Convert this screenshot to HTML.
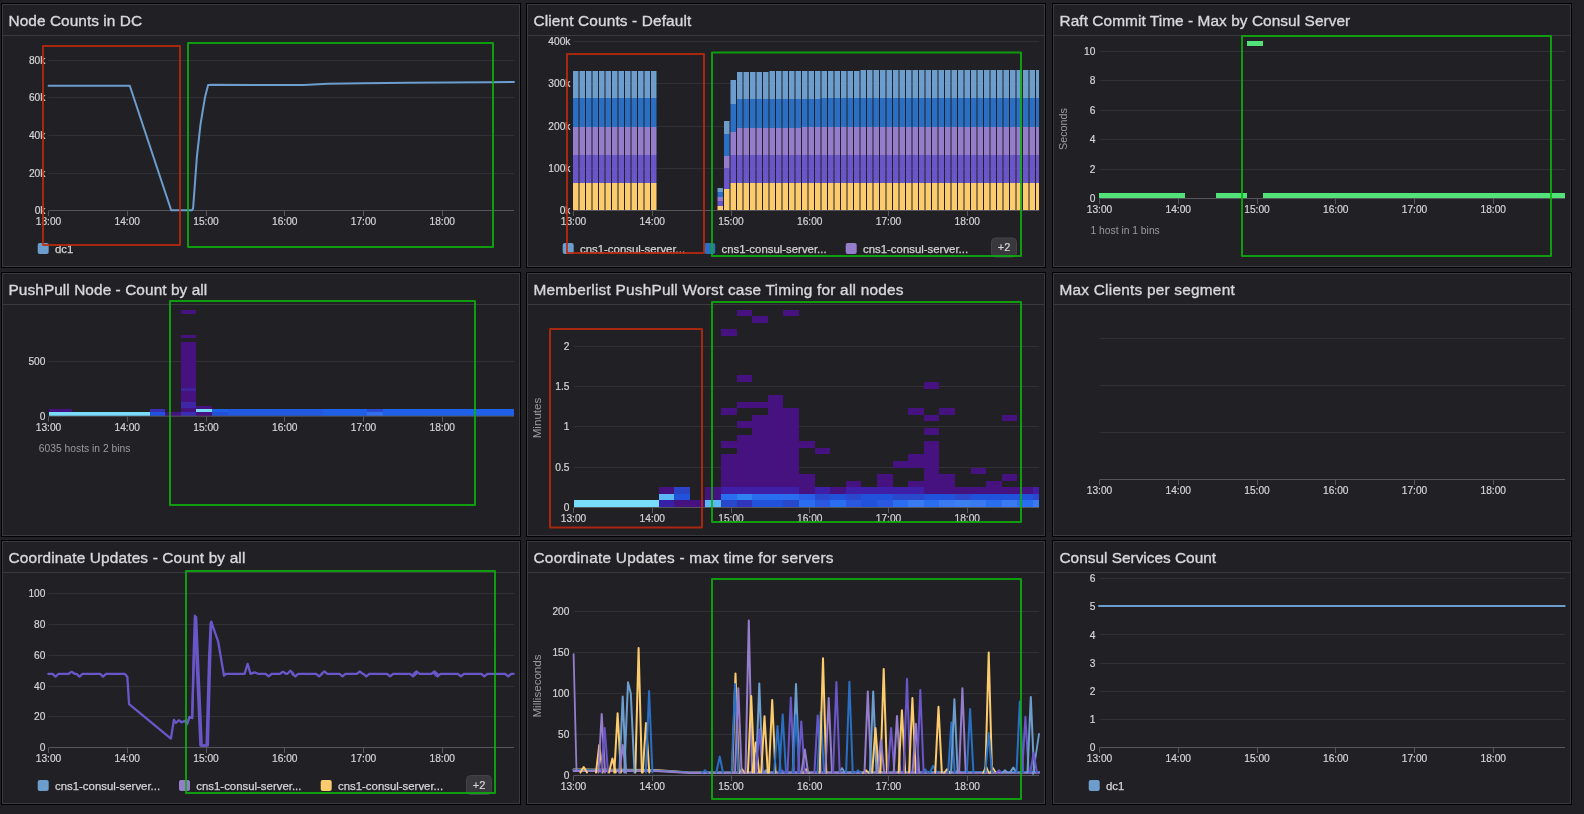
<!DOCTYPE html>
<html><head><meta charset="utf-8"><style>
html,body{margin:0;padding:0;background:#212125;width:1584px;height:814px;overflow:hidden}
svg{display:block;font-family:"Liberation Sans",sans-serif;will-change:transform}
</style></head><body>
<svg width="1584" height="814" viewBox="0 0 1584 814">
<rect width="1584" height="814" fill="#212125"/>
<rect x="1.5" y="3.5" width="519" height="264" fill="#212125" stroke="#000000" stroke-width="1"/>
<rect x="2.5" y="4.5" width="517" height="262" fill="none" stroke="#39393e" stroke-width="1"/>
<line x1="3" y1="35.5" x2="519" y2="35.5" stroke="#39393e" stroke-width="1" />
<text x="8.5" y="26" font-size="15.4" fill="#d8d8da" text-anchor="start" stroke="#d8d8da" stroke-width="0.35" letter-spacing="0.062">Node Counts in DC</text>
<line x1="48.5" y1="173.5" x2="514" y2="173.5" stroke="#303035" stroke-width="1" />
<text x="45.4" y="176.6" font-size="10.2" fill="#d4d4d6" text-anchor="end" stroke="#d4d4d6" stroke-width="0.2">20k</text>
<line x1="48.5" y1="135.5" x2="514" y2="135.5" stroke="#303035" stroke-width="1" />
<text x="45.4" y="139" font-size="10.2" fill="#d4d4d6" text-anchor="end" stroke="#d4d4d6" stroke-width="0.2">40k</text>
<line x1="48.5" y1="97.5" x2="514" y2="97.5" stroke="#303035" stroke-width="1" />
<text x="45.4" y="101.4" font-size="10.2" fill="#d4d4d6" text-anchor="end" stroke="#d4d4d6" stroke-width="0.2">60k</text>
<line x1="48.5" y1="60.5" x2="514" y2="60.5" stroke="#303035" stroke-width="1" />
<text x="45.4" y="63.8" font-size="10.2" fill="#d4d4d6" text-anchor="end" stroke="#d4d4d6" stroke-width="0.2">80k</text>
<text x="45.4" y="214.2" font-size="10.2" fill="#d4d4d6" text-anchor="end" stroke="#d4d4d6" stroke-width="0.2">0k</text>
<line x1="48.5" y1="210.5" x2="514" y2="210.5" stroke="#55555b" stroke-width="1" />
<line x1="48.5" y1="211" x2="48.5" y2="216" stroke="#55555b" stroke-width="1" />
<text x="48.5" y="225" font-size="10.2" fill="#d4d4d6" text-anchor="middle" stroke="#d4d4d6" stroke-width="0.2">13:00</text>
<line x1="127.5" y1="211" x2="127.5" y2="216" stroke="#55555b" stroke-width="1" />
<text x="127.25" y="225" font-size="10.2" fill="#d4d4d6" text-anchor="middle" stroke="#d4d4d6" stroke-width="0.2">14:00</text>
<line x1="206.5" y1="211" x2="206.5" y2="216" stroke="#55555b" stroke-width="1" />
<text x="206" y="225" font-size="10.2" fill="#d4d4d6" text-anchor="middle" stroke="#d4d4d6" stroke-width="0.2">15:00</text>
<line x1="284.5" y1="211" x2="284.5" y2="216" stroke="#55555b" stroke-width="1" />
<text x="284.75" y="225" font-size="10.2" fill="#d4d4d6" text-anchor="middle" stroke="#d4d4d6" stroke-width="0.2">16:00</text>
<line x1="363.5" y1="211" x2="363.5" y2="216" stroke="#55555b" stroke-width="1" />
<text x="363.5" y="225" font-size="10.2" fill="#d4d4d6" text-anchor="middle" stroke="#d4d4d6" stroke-width="0.2">17:00</text>
<line x1="442.5" y1="211" x2="442.5" y2="216" stroke="#55555b" stroke-width="1" />
<text x="442.25" y="225" font-size="10.2" fill="#d4d4d6" text-anchor="middle" stroke="#d4d4d6" stroke-width="0.2">18:00</text>
<path d="M48.6 85.8 L129.8 85.8 L171.2 210.3 L192 210.3 L193.1 208.4 L196.9 156.8 L200.5 124.3 L204.9 97.8 L208.1 85.1 L212.3 84.8 L304 85.1 L327.8 83.7 L363.2 83.2 L407.4 82.8 L490 82.2 L514 81.9" fill="none" stroke="#6c9dcd" stroke-width="2" stroke-linejoin="round" stroke-linecap="round" />
<rect x="37.7" y="242.9" width="11" height="11" rx="2" fill="#6c9dcd"/>
<text x="55" y="252.5" font-size="11.4" fill="#d4d4d6" text-anchor="start" stroke="#d4d4d6" stroke-width="0.25">dc1</text>
<rect x="526.5" y="3.5" width="519" height="264" fill="#212125" stroke="#000000" stroke-width="1"/>
<rect x="527.5" y="4.5" width="517" height="262" fill="none" stroke="#39393e" stroke-width="1"/>
<line x1="528" y1="35.5" x2="1044" y2="35.5" stroke="#39393e" stroke-width="1" />
<text x="533.5" y="26" font-size="15.4" fill="#d8d8da" text-anchor="start" stroke="#d8d8da" stroke-width="0.35" letter-spacing="0.136">Client Counts - Default</text>
<line x1="573.5" y1="168.5" x2="1039" y2="168.5" stroke="#303035" stroke-width="1" />
<text x="570.4" y="171.95" font-size="10.2" fill="#d4d4d6" text-anchor="end" stroke="#d4d4d6" stroke-width="0.2">100k</text>
<line x1="573.5" y1="126.5" x2="1039" y2="126.5" stroke="#303035" stroke-width="1" />
<text x="570.4" y="129.7" font-size="10.2" fill="#d4d4d6" text-anchor="end" stroke="#d4d4d6" stroke-width="0.2">200k</text>
<line x1="573.5" y1="83.5" x2="1039" y2="83.5" stroke="#303035" stroke-width="1" />
<text x="570.4" y="87.45" font-size="10.2" fill="#d4d4d6" text-anchor="end" stroke="#d4d4d6" stroke-width="0.2">300k</text>
<line x1="573.5" y1="41.5" x2="1039" y2="41.5" stroke="#303035" stroke-width="1" />
<text x="570.4" y="45.2" font-size="10.2" fill="#d4d4d6" text-anchor="end" stroke="#d4d4d6" stroke-width="0.2">400k</text>
<text x="570.4" y="214.2" font-size="10.2" fill="#d4d4d6" text-anchor="end" stroke="#d4d4d6" stroke-width="0.2">0k</text>
<rect x="573" y="183" width="5.5" height="27" fill="#fccb6e" />
<rect x="573" y="155" width="5.5" height="28" fill="#6a56c8" />
<rect x="573" y="127" width="5.5" height="28" fill="#957dcb" />
<rect x="573" y="98" width="5.5" height="29" fill="#2a6fc3" />
<rect x="573" y="71" width="5.5" height="27" fill="#6c9dcd" />
<rect x="579.5" y="183" width="5.5" height="27" fill="#fccb6e" />
<rect x="579.5" y="155" width="5.5" height="28" fill="#6a56c8" />
<rect x="579.5" y="127" width="5.5" height="28" fill="#957dcb" />
<rect x="579.5" y="98" width="5.5" height="29" fill="#2a6fc3" />
<rect x="579.5" y="71" width="5.5" height="27" fill="#6c9dcd" />
<rect x="586" y="183" width="5.5" height="27" fill="#fccb6e" />
<rect x="586" y="155" width="5.5" height="28" fill="#6a56c8" />
<rect x="586" y="127" width="5.5" height="28" fill="#957dcb" />
<rect x="586" y="98" width="5.5" height="29" fill="#2a6fc3" />
<rect x="586" y="71" width="5.5" height="27" fill="#6c9dcd" />
<rect x="592.5" y="183" width="5.5" height="27" fill="#fccb6e" />
<rect x="592.5" y="155" width="5.5" height="28" fill="#6a56c8" />
<rect x="592.5" y="127" width="5.5" height="28" fill="#957dcb" />
<rect x="592.5" y="98" width="5.5" height="29" fill="#2a6fc3" />
<rect x="592.5" y="71" width="5.5" height="27" fill="#6c9dcd" />
<rect x="599" y="183" width="5.5" height="27" fill="#fccb6e" />
<rect x="599" y="155" width="5.5" height="28" fill="#6a56c8" />
<rect x="599" y="127" width="5.5" height="28" fill="#957dcb" />
<rect x="599" y="98" width="5.5" height="29" fill="#2a6fc3" />
<rect x="599" y="71" width="5.5" height="27" fill="#6c9dcd" />
<rect x="605.5" y="183" width="5.5" height="27" fill="#fccb6e" />
<rect x="605.5" y="155" width="5.5" height="28" fill="#6a56c8" />
<rect x="605.5" y="127" width="5.5" height="28" fill="#957dcb" />
<rect x="605.5" y="98" width="5.5" height="29" fill="#2a6fc3" />
<rect x="605.5" y="71" width="5.5" height="27" fill="#6c9dcd" />
<rect x="612" y="183" width="5.5" height="27" fill="#fccb6e" />
<rect x="612" y="155" width="5.5" height="28" fill="#6a56c8" />
<rect x="612" y="127" width="5.5" height="28" fill="#957dcb" />
<rect x="612" y="98" width="5.5" height="29" fill="#2a6fc3" />
<rect x="612" y="71" width="5.5" height="27" fill="#6c9dcd" />
<rect x="618.5" y="183" width="5.5" height="27" fill="#fccb6e" />
<rect x="618.5" y="155" width="5.5" height="28" fill="#6a56c8" />
<rect x="618.5" y="127" width="5.5" height="28" fill="#957dcb" />
<rect x="618.5" y="98" width="5.5" height="29" fill="#2a6fc3" />
<rect x="618.5" y="71" width="5.5" height="27" fill="#6c9dcd" />
<rect x="625" y="183" width="5.5" height="27" fill="#fccb6e" />
<rect x="625" y="155" width="5.5" height="28" fill="#6a56c8" />
<rect x="625" y="127" width="5.5" height="28" fill="#957dcb" />
<rect x="625" y="98" width="5.5" height="29" fill="#2a6fc3" />
<rect x="625" y="71" width="5.5" height="27" fill="#6c9dcd" />
<rect x="631.5" y="183" width="5.5" height="27" fill="#fccb6e" />
<rect x="631.5" y="155" width="5.5" height="28" fill="#6a56c8" />
<rect x="631.5" y="127" width="5.5" height="28" fill="#957dcb" />
<rect x="631.5" y="98" width="5.5" height="29" fill="#2a6fc3" />
<rect x="631.5" y="71" width="5.5" height="27" fill="#6c9dcd" />
<rect x="638" y="183" width="5.5" height="27" fill="#fccb6e" />
<rect x="638" y="155" width="5.5" height="28" fill="#6a56c8" />
<rect x="638" y="127" width="5.5" height="28" fill="#957dcb" />
<rect x="638" y="98" width="5.5" height="29" fill="#2a6fc3" />
<rect x="638" y="71" width="5.5" height="27" fill="#6c9dcd" />
<rect x="644.5" y="183" width="5.5" height="27" fill="#fccb6e" />
<rect x="644.5" y="155" width="5.5" height="28" fill="#6a56c8" />
<rect x="644.5" y="127" width="5.5" height="28" fill="#957dcb" />
<rect x="644.5" y="98" width="5.5" height="29" fill="#2a6fc3" />
<rect x="644.5" y="71" width="5.5" height="27" fill="#6c9dcd" />
<rect x="651" y="183" width="5.5" height="27" fill="#fccb6e" />
<rect x="651" y="155" width="5.5" height="28" fill="#6a56c8" />
<rect x="651" y="127" width="5.5" height="28" fill="#957dcb" />
<rect x="651" y="98" width="5.5" height="29" fill="#2a6fc3" />
<rect x="651" y="71" width="5.5" height="27" fill="#6c9dcd" />
<rect x="717.5" y="206" width="5.5" height="4" fill="#fccb6e" />
<rect x="717.5" y="201" width="5.5" height="5" fill="#6a56c8" />
<rect x="717.5" y="197" width="5.5" height="4" fill="#957dcb" />
<rect x="717.5" y="192" width="5.5" height="5" fill="#2a6fc3" />
<rect x="717.5" y="188" width="5.5" height="4" fill="#6c9dcd" />
<rect x="724" y="189" width="5.5" height="21" fill="#fccb6e" />
<rect x="724" y="168" width="5.5" height="21" fill="#6a56c8" />
<rect x="724" y="156" width="5.5" height="12" fill="#957dcb" />
<rect x="724" y="134" width="5.5" height="22" fill="#2a6fc3" />
<rect x="724" y="121" width="5.5" height="13" fill="#6c9dcd" />
<rect x="730.5" y="183" width="5.5" height="27" fill="#fccb6e" />
<rect x="730.5" y="155" width="5.5" height="28" fill="#6a56c8" />
<rect x="730.5" y="132" width="5.5" height="23" fill="#957dcb" />
<rect x="730.5" y="104" width="5.5" height="28" fill="#2a6fc3" />
<rect x="730.5" y="80" width="5.5" height="24" fill="#6c9dcd" />
<rect x="737" y="183" width="5.5" height="27" fill="#fccb6e" />
<rect x="737" y="155" width="5.5" height="28" fill="#6a56c8" />
<rect x="737" y="128" width="5.5" height="27" fill="#957dcb" />
<rect x="737" y="99" width="5.5" height="29" fill="#2a6fc3" />
<rect x="737" y="72" width="5.5" height="27" fill="#6c9dcd" />
<rect x="743.5" y="183" width="5.5" height="27" fill="#fccb6e" />
<rect x="743.5" y="155" width="5.5" height="28" fill="#6a56c8" />
<rect x="743.5" y="128" width="5.5" height="27" fill="#957dcb" />
<rect x="743.5" y="99" width="5.5" height="29" fill="#2a6fc3" />
<rect x="743.5" y="72" width="5.5" height="27" fill="#6c9dcd" />
<rect x="750" y="183" width="5.5" height="27" fill="#fccb6e" />
<rect x="750" y="155" width="5.5" height="28" fill="#6a56c8" />
<rect x="750" y="128" width="5.5" height="27" fill="#957dcb" />
<rect x="750" y="99" width="5.5" height="29" fill="#2a6fc3" />
<rect x="750" y="72" width="5.5" height="27" fill="#6c9dcd" />
<rect x="756.5" y="183" width="5.5" height="27" fill="#fccb6e" />
<rect x="756.5" y="155" width="5.5" height="28" fill="#6a56c8" />
<rect x="756.5" y="128" width="5.5" height="27" fill="#957dcb" />
<rect x="756.5" y="99" width="5.5" height="29" fill="#2a6fc3" />
<rect x="756.5" y="72" width="5.5" height="27" fill="#6c9dcd" />
<rect x="763" y="183" width="5.5" height="27" fill="#fccb6e" />
<rect x="763" y="155" width="5.5" height="28" fill="#6a56c8" />
<rect x="763" y="128" width="5.5" height="27" fill="#957dcb" />
<rect x="763" y="99" width="5.5" height="29" fill="#2a6fc3" />
<rect x="763" y="72" width="5.5" height="27" fill="#6c9dcd" />
<rect x="769.5" y="183" width="5.5" height="27" fill="#fccb6e" />
<rect x="769.5" y="155" width="5.5" height="28" fill="#6a56c8" />
<rect x="769.5" y="128" width="5.5" height="27" fill="#957dcb" />
<rect x="769.5" y="99" width="5.5" height="29" fill="#2a6fc3" />
<rect x="769.5" y="71" width="5.5" height="28" fill="#6c9dcd" />
<rect x="776" y="183" width="5.5" height="27" fill="#fccb6e" />
<rect x="776" y="155" width="5.5" height="28" fill="#6a56c8" />
<rect x="776" y="128" width="5.5" height="27" fill="#957dcb" />
<rect x="776" y="99" width="5.5" height="29" fill="#2a6fc3" />
<rect x="776" y="71" width="5.5" height="28" fill="#6c9dcd" />
<rect x="782.5" y="183" width="5.5" height="27" fill="#fccb6e" />
<rect x="782.5" y="155" width="5.5" height="28" fill="#6a56c8" />
<rect x="782.5" y="128" width="5.5" height="27" fill="#957dcb" />
<rect x="782.5" y="99" width="5.5" height="29" fill="#2a6fc3" />
<rect x="782.5" y="71" width="5.5" height="28" fill="#6c9dcd" />
<rect x="789" y="183" width="5.5" height="27" fill="#fccb6e" />
<rect x="789" y="155" width="5.5" height="28" fill="#6a56c8" />
<rect x="789" y="128" width="5.5" height="27" fill="#957dcb" />
<rect x="789" y="99" width="5.5" height="29" fill="#2a6fc3" />
<rect x="789" y="71" width="5.5" height="28" fill="#6c9dcd" />
<rect x="795.5" y="183" width="5.5" height="27" fill="#fccb6e" />
<rect x="795.5" y="155" width="5.5" height="28" fill="#6a56c8" />
<rect x="795.5" y="128" width="5.5" height="27" fill="#957dcb" />
<rect x="795.5" y="99" width="5.5" height="29" fill="#2a6fc3" />
<rect x="795.5" y="71" width="5.5" height="28" fill="#6c9dcd" />
<rect x="802" y="183" width="5.5" height="27" fill="#fccb6e" />
<rect x="802" y="155" width="5.5" height="28" fill="#6a56c8" />
<rect x="802" y="127" width="5.5" height="28" fill="#957dcb" />
<rect x="802" y="99" width="5.5" height="28" fill="#2a6fc3" />
<rect x="802" y="71" width="5.5" height="28" fill="#6c9dcd" />
<rect x="808.5" y="183" width="5.5" height="27" fill="#fccb6e" />
<rect x="808.5" y="155" width="5.5" height="28" fill="#6a56c8" />
<rect x="808.5" y="127" width="5.5" height="28" fill="#957dcb" />
<rect x="808.5" y="99" width="5.5" height="28" fill="#2a6fc3" />
<rect x="808.5" y="71" width="5.5" height="28" fill="#6c9dcd" />
<rect x="815" y="183" width="5.5" height="27" fill="#fccb6e" />
<rect x="815" y="155" width="5.5" height="28" fill="#6a56c8" />
<rect x="815" y="127" width="5.5" height="28" fill="#957dcb" />
<rect x="815" y="99" width="5.5" height="28" fill="#2a6fc3" />
<rect x="815" y="71" width="5.5" height="28" fill="#6c9dcd" />
<rect x="821.5" y="183" width="5.5" height="27" fill="#fccb6e" />
<rect x="821.5" y="155" width="5.5" height="28" fill="#6a56c8" />
<rect x="821.5" y="127" width="5.5" height="28" fill="#957dcb" />
<rect x="821.5" y="98" width="5.5" height="29" fill="#2a6fc3" />
<rect x="821.5" y="71" width="5.5" height="27" fill="#6c9dcd" />
<rect x="828" y="183" width="5.5" height="27" fill="#fccb6e" />
<rect x="828" y="155" width="5.5" height="28" fill="#6a56c8" />
<rect x="828" y="127" width="5.5" height="28" fill="#957dcb" />
<rect x="828" y="98" width="5.5" height="29" fill="#2a6fc3" />
<rect x="828" y="71" width="5.5" height="27" fill="#6c9dcd" />
<rect x="834.5" y="183" width="5.5" height="27" fill="#fccb6e" />
<rect x="834.5" y="155" width="5.5" height="28" fill="#6a56c8" />
<rect x="834.5" y="127" width="5.5" height="28" fill="#957dcb" />
<rect x="834.5" y="98" width="5.5" height="29" fill="#2a6fc3" />
<rect x="834.5" y="71" width="5.5" height="27" fill="#6c9dcd" />
<rect x="841" y="183" width="5.5" height="27" fill="#fccb6e" />
<rect x="841" y="155" width="5.5" height="28" fill="#6a56c8" />
<rect x="841" y="127" width="5.5" height="28" fill="#957dcb" />
<rect x="841" y="98" width="5.5" height="29" fill="#2a6fc3" />
<rect x="841" y="71" width="5.5" height="27" fill="#6c9dcd" />
<rect x="847.5" y="183" width="5.5" height="27" fill="#fccb6e" />
<rect x="847.5" y="155" width="5.5" height="28" fill="#6a56c8" />
<rect x="847.5" y="127" width="5.5" height="28" fill="#957dcb" />
<rect x="847.5" y="98" width="5.5" height="29" fill="#2a6fc3" />
<rect x="847.5" y="71" width="5.5" height="27" fill="#6c9dcd" />
<rect x="854" y="183" width="5.5" height="27" fill="#fccb6e" />
<rect x="854" y="155" width="5.5" height="28" fill="#6a56c8" />
<rect x="854" y="127" width="5.5" height="28" fill="#957dcb" />
<rect x="854" y="98" width="5.5" height="29" fill="#2a6fc3" />
<rect x="854" y="71" width="5.5" height="27" fill="#6c9dcd" />
<rect x="860.5" y="183" width="5.5" height="27" fill="#fccb6e" />
<rect x="860.5" y="155" width="5.5" height="28" fill="#6a56c8" />
<rect x="860.5" y="127" width="5.5" height="28" fill="#957dcb" />
<rect x="860.5" y="98" width="5.5" height="29" fill="#2a6fc3" />
<rect x="860.5" y="70" width="5.5" height="28" fill="#6c9dcd" />
<rect x="867" y="183" width="5.5" height="27" fill="#fccb6e" />
<rect x="867" y="155" width="5.5" height="28" fill="#6a56c8" />
<rect x="867" y="127" width="5.5" height="28" fill="#957dcb" />
<rect x="867" y="98" width="5.5" height="29" fill="#2a6fc3" />
<rect x="867" y="70" width="5.5" height="28" fill="#6c9dcd" />
<rect x="873.5" y="183" width="5.5" height="27" fill="#fccb6e" />
<rect x="873.5" y="155" width="5.5" height="28" fill="#6a56c8" />
<rect x="873.5" y="127" width="5.5" height="28" fill="#957dcb" />
<rect x="873.5" y="98" width="5.5" height="29" fill="#2a6fc3" />
<rect x="873.5" y="70" width="5.5" height="28" fill="#6c9dcd" />
<rect x="880" y="183" width="5.5" height="27" fill="#fccb6e" />
<rect x="880" y="155" width="5.5" height="28" fill="#6a56c8" />
<rect x="880" y="127" width="5.5" height="28" fill="#957dcb" />
<rect x="880" y="98" width="5.5" height="29" fill="#2a6fc3" />
<rect x="880" y="70" width="5.5" height="28" fill="#6c9dcd" />
<rect x="886.5" y="183" width="5.5" height="27" fill="#fccb6e" />
<rect x="886.5" y="155" width="5.5" height="28" fill="#6a56c8" />
<rect x="886.5" y="127" width="5.5" height="28" fill="#957dcb" />
<rect x="886.5" y="98" width="5.5" height="29" fill="#2a6fc3" />
<rect x="886.5" y="70" width="5.5" height="28" fill="#6c9dcd" />
<rect x="893" y="183" width="5.5" height="27" fill="#fccb6e" />
<rect x="893" y="155" width="5.5" height="28" fill="#6a56c8" />
<rect x="893" y="127" width="5.5" height="28" fill="#957dcb" />
<rect x="893" y="98" width="5.5" height="29" fill="#2a6fc3" />
<rect x="893" y="70" width="5.5" height="28" fill="#6c9dcd" />
<rect x="899.5" y="183" width="5.5" height="27" fill="#fccb6e" />
<rect x="899.5" y="155" width="5.5" height="28" fill="#6a56c8" />
<rect x="899.5" y="127" width="5.5" height="28" fill="#957dcb" />
<rect x="899.5" y="98" width="5.5" height="29" fill="#2a6fc3" />
<rect x="899.5" y="70" width="5.5" height="28" fill="#6c9dcd" />
<rect x="906" y="183" width="5.5" height="27" fill="#fccb6e" />
<rect x="906" y="155" width="5.5" height="28" fill="#6a56c8" />
<rect x="906" y="127" width="5.5" height="28" fill="#957dcb" />
<rect x="906" y="98" width="5.5" height="29" fill="#2a6fc3" />
<rect x="906" y="70" width="5.5" height="28" fill="#6c9dcd" />
<rect x="912.5" y="183" width="5.5" height="27" fill="#fccb6e" />
<rect x="912.5" y="155" width="5.5" height="28" fill="#6a56c8" />
<rect x="912.5" y="127" width="5.5" height="28" fill="#957dcb" />
<rect x="912.5" y="98" width="5.5" height="29" fill="#2a6fc3" />
<rect x="912.5" y="70" width="5.5" height="28" fill="#6c9dcd" />
<rect x="919" y="183" width="5.5" height="27" fill="#fccb6e" />
<rect x="919" y="155" width="5.5" height="28" fill="#6a56c8" />
<rect x="919" y="127" width="5.5" height="28" fill="#957dcb" />
<rect x="919" y="98" width="5.5" height="29" fill="#2a6fc3" />
<rect x="919" y="70" width="5.5" height="28" fill="#6c9dcd" />
<rect x="925.5" y="183" width="5.5" height="27" fill="#fccb6e" />
<rect x="925.5" y="155" width="5.5" height="28" fill="#6a56c8" />
<rect x="925.5" y="127" width="5.5" height="28" fill="#957dcb" />
<rect x="925.5" y="98" width="5.5" height="29" fill="#2a6fc3" />
<rect x="925.5" y="70" width="5.5" height="28" fill="#6c9dcd" />
<rect x="932" y="183" width="5.5" height="27" fill="#fccb6e" />
<rect x="932" y="155" width="5.5" height="28" fill="#6a56c8" />
<rect x="932" y="127" width="5.5" height="28" fill="#957dcb" />
<rect x="932" y="98" width="5.5" height="29" fill="#2a6fc3" />
<rect x="932" y="70" width="5.5" height="28" fill="#6c9dcd" />
<rect x="938.5" y="183" width="5.5" height="27" fill="#fccb6e" />
<rect x="938.5" y="155" width="5.5" height="28" fill="#6a56c8" />
<rect x="938.5" y="127" width="5.5" height="28" fill="#957dcb" />
<rect x="938.5" y="98" width="5.5" height="29" fill="#2a6fc3" />
<rect x="938.5" y="70" width="5.5" height="28" fill="#6c9dcd" />
<rect x="945" y="183" width="5.5" height="27" fill="#fccb6e" />
<rect x="945" y="155" width="5.5" height="28" fill="#6a56c8" />
<rect x="945" y="127" width="5.5" height="28" fill="#957dcb" />
<rect x="945" y="98" width="5.5" height="29" fill="#2a6fc3" />
<rect x="945" y="70" width="5.5" height="28" fill="#6c9dcd" />
<rect x="951.5" y="183" width="5.5" height="27" fill="#fccb6e" />
<rect x="951.5" y="155" width="5.5" height="28" fill="#6a56c8" />
<rect x="951.5" y="127" width="5.5" height="28" fill="#957dcb" />
<rect x="951.5" y="98" width="5.5" height="29" fill="#2a6fc3" />
<rect x="951.5" y="70" width="5.5" height="28" fill="#6c9dcd" />
<rect x="958" y="183" width="5.5" height="27" fill="#fccb6e" />
<rect x="958" y="155" width="5.5" height="28" fill="#6a56c8" />
<rect x="958" y="127" width="5.5" height="28" fill="#957dcb" />
<rect x="958" y="98" width="5.5" height="29" fill="#2a6fc3" />
<rect x="958" y="70" width="5.5" height="28" fill="#6c9dcd" />
<rect x="964.5" y="183" width="5.5" height="27" fill="#fccb6e" />
<rect x="964.5" y="155" width="5.5" height="28" fill="#6a56c8" />
<rect x="964.5" y="127" width="5.5" height="28" fill="#957dcb" />
<rect x="964.5" y="98" width="5.5" height="29" fill="#2a6fc3" />
<rect x="964.5" y="70" width="5.5" height="28" fill="#6c9dcd" />
<rect x="971" y="183" width="5.5" height="27" fill="#fccb6e" />
<rect x="971" y="155" width="5.5" height="28" fill="#6a56c8" />
<rect x="971" y="127" width="5.5" height="28" fill="#957dcb" />
<rect x="971" y="98" width="5.5" height="29" fill="#2a6fc3" />
<rect x="971" y="70" width="5.5" height="28" fill="#6c9dcd" />
<rect x="977.5" y="183" width="5.5" height="27" fill="#fccb6e" />
<rect x="977.5" y="155" width="5.5" height="28" fill="#6a56c8" />
<rect x="977.5" y="127" width="5.5" height="28" fill="#957dcb" />
<rect x="977.5" y="98" width="5.5" height="29" fill="#2a6fc3" />
<rect x="977.5" y="70" width="5.5" height="28" fill="#6c9dcd" />
<rect x="984" y="183" width="5.5" height="27" fill="#fccb6e" />
<rect x="984" y="155" width="5.5" height="28" fill="#6a56c8" />
<rect x="984" y="127" width="5.5" height="28" fill="#957dcb" />
<rect x="984" y="98" width="5.5" height="29" fill="#2a6fc3" />
<rect x="984" y="70" width="5.5" height="28" fill="#6c9dcd" />
<rect x="990.5" y="183" width="5.5" height="27" fill="#fccb6e" />
<rect x="990.5" y="155" width="5.5" height="28" fill="#6a56c8" />
<rect x="990.5" y="127" width="5.5" height="28" fill="#957dcb" />
<rect x="990.5" y="98" width="5.5" height="29" fill="#2a6fc3" />
<rect x="990.5" y="70" width="5.5" height="28" fill="#6c9dcd" />
<rect x="997" y="183" width="5.5" height="27" fill="#fccb6e" />
<rect x="997" y="155" width="5.5" height="28" fill="#6a56c8" />
<rect x="997" y="127" width="5.5" height="28" fill="#957dcb" />
<rect x="997" y="98" width="5.5" height="29" fill="#2a6fc3" />
<rect x="997" y="70" width="5.5" height="28" fill="#6c9dcd" />
<rect x="1003.5" y="183" width="5.5" height="27" fill="#fccb6e" />
<rect x="1003.5" y="155" width="5.5" height="28" fill="#6a56c8" />
<rect x="1003.5" y="127" width="5.5" height="28" fill="#957dcb" />
<rect x="1003.5" y="98" width="5.5" height="29" fill="#2a6fc3" />
<rect x="1003.5" y="70" width="5.5" height="28" fill="#6c9dcd" />
<rect x="1010" y="183" width="5.5" height="27" fill="#fccb6e" />
<rect x="1010" y="155" width="5.5" height="28" fill="#6a56c8" />
<rect x="1010" y="127" width="5.5" height="28" fill="#957dcb" />
<rect x="1010" y="98" width="5.5" height="29" fill="#2a6fc3" />
<rect x="1010" y="70" width="5.5" height="28" fill="#6c9dcd" />
<rect x="1016.5" y="183" width="5.5" height="27" fill="#fccb6e" />
<rect x="1016.5" y="155" width="5.5" height="28" fill="#6a56c8" />
<rect x="1016.5" y="127" width="5.5" height="28" fill="#957dcb" />
<rect x="1016.5" y="98" width="5.5" height="29" fill="#2a6fc3" />
<rect x="1016.5" y="70" width="5.5" height="28" fill="#6c9dcd" />
<rect x="1023" y="183" width="5.5" height="27" fill="#fccb6e" />
<rect x="1023" y="155" width="5.5" height="28" fill="#6a56c8" />
<rect x="1023" y="127" width="5.5" height="28" fill="#957dcb" />
<rect x="1023" y="98" width="5.5" height="29" fill="#2a6fc3" />
<rect x="1023" y="70" width="5.5" height="28" fill="#6c9dcd" />
<rect x="1029.5" y="183" width="5.5" height="27" fill="#fccb6e" />
<rect x="1029.5" y="155" width="5.5" height="28" fill="#6a56c8" />
<rect x="1029.5" y="127" width="5.5" height="28" fill="#957dcb" />
<rect x="1029.5" y="98" width="5.5" height="29" fill="#2a6fc3" />
<rect x="1029.5" y="70" width="5.5" height="28" fill="#6c9dcd" />
<rect x="1036" y="183" width="3" height="27" fill="#fccb6e" />
<rect x="1036" y="155" width="3" height="28" fill="#6a56c8" />
<rect x="1036" y="127" width="3" height="28" fill="#957dcb" />
<rect x="1036" y="98" width="3" height="29" fill="#2a6fc3" />
<rect x="1036" y="70" width="3" height="28" fill="#6c9dcd" />
<line x1="573.5" y1="210.5" x2="1039" y2="210.5" stroke="#55555b" stroke-width="1" />
<line x1="573.5" y1="211" x2="573.5" y2="216" stroke="#55555b" stroke-width="1" />
<text x="573.5" y="225" font-size="10.2" fill="#d4d4d6" text-anchor="middle" stroke="#d4d4d6" stroke-width="0.2">13:00</text>
<line x1="652.5" y1="211" x2="652.5" y2="216" stroke="#55555b" stroke-width="1" />
<text x="652.25" y="225" font-size="10.2" fill="#d4d4d6" text-anchor="middle" stroke="#d4d4d6" stroke-width="0.2">14:00</text>
<line x1="731.5" y1="211" x2="731.5" y2="216" stroke="#55555b" stroke-width="1" />
<text x="731" y="225" font-size="10.2" fill="#d4d4d6" text-anchor="middle" stroke="#d4d4d6" stroke-width="0.2">15:00</text>
<line x1="809.5" y1="211" x2="809.5" y2="216" stroke="#55555b" stroke-width="1" />
<text x="809.75" y="225" font-size="10.2" fill="#d4d4d6" text-anchor="middle" stroke="#d4d4d6" stroke-width="0.2">16:00</text>
<line x1="888.5" y1="211" x2="888.5" y2="216" stroke="#55555b" stroke-width="1" />
<text x="888.5" y="225" font-size="10.2" fill="#d4d4d6" text-anchor="middle" stroke="#d4d4d6" stroke-width="0.2">17:00</text>
<line x1="967.5" y1="211" x2="967.5" y2="216" stroke="#55555b" stroke-width="1" />
<text x="967.25" y="225" font-size="10.2" fill="#d4d4d6" text-anchor="middle" stroke="#d4d4d6" stroke-width="0.2">18:00</text>
<rect x="562.7" y="242.9" width="11" height="11" rx="2" fill="#6c9dcd"/>
<text x="580" y="252.5" font-size="11.4" fill="#d4d4d6" text-anchor="start" stroke="#d4d4d6" stroke-width="0.25">cns1-consul-server...</text>
<rect x="704.2" y="242.9" width="11" height="11" rx="2" fill="#2a6fc3"/>
<text x="721.5" y="252.5" font-size="11.4" fill="#d4d4d6" text-anchor="start" stroke="#d4d4d6" stroke-width="0.25">cns1-consul-server...</text>
<rect x="845.7" y="242.9" width="11" height="11" rx="2" fill="#957dcb"/>
<text x="863" y="252.5" font-size="11.4" fill="#d4d4d6" text-anchor="start" stroke="#d4d4d6" stroke-width="0.25">cns1-consul-server...</text>
<rect x="991.5" y="238" width="25" height="19" rx="4" fill="#39383d" stroke="#434248"/>
<text x="1004" y="251.3" font-size="11" fill="#d4d4d6" text-anchor="middle" stroke="#d4d4d6" stroke-width="0.2">+2</text>
<rect x="1052.5" y="3.5" width="519" height="264" fill="#212125" stroke="#000000" stroke-width="1"/>
<rect x="1053.5" y="4.5" width="517" height="262" fill="none" stroke="#39393e" stroke-width="1"/>
<line x1="1054" y1="35.5" x2="1570" y2="35.5" stroke="#39393e" stroke-width="1" />
<text x="1059.5" y="26" font-size="15.4" fill="#d8d8da" text-anchor="start" stroke="#d8d8da" stroke-width="0.35" letter-spacing="0.066">Raft Commit Time - Max by Consul Server</text>
<line x1="1099.5" y1="169.5" x2="1565" y2="169.5" stroke="#303035" stroke-width="1" />
<text x="1095.4" y="172.8" font-size="10.2" fill="#d4d4d6" text-anchor="end" stroke="#d4d4d6" stroke-width="0.2">2</text>
<line x1="1099.5" y1="139.5" x2="1565" y2="139.5" stroke="#303035" stroke-width="1" />
<text x="1095.4" y="143.3" font-size="10.2" fill="#d4d4d6" text-anchor="end" stroke="#d4d4d6" stroke-width="0.2">4</text>
<line x1="1099.5" y1="110.5" x2="1565" y2="110.5" stroke="#303035" stroke-width="1" />
<text x="1095.4" y="113.8" font-size="10.2" fill="#d4d4d6" text-anchor="end" stroke="#d4d4d6" stroke-width="0.2">6</text>
<line x1="1099.5" y1="80.5" x2="1565" y2="80.5" stroke="#303035" stroke-width="1" />
<text x="1095.4" y="84.3" font-size="10.2" fill="#d4d4d6" text-anchor="end" stroke="#d4d4d6" stroke-width="0.2">8</text>
<line x1="1099.5" y1="51.5" x2="1565" y2="51.5" stroke="#303035" stroke-width="1" />
<text x="1095.4" y="54.8" font-size="10.2" fill="#d4d4d6" text-anchor="end" stroke="#d4d4d6" stroke-width="0.2">10</text>
<text x="1095.4" y="202.3" font-size="10.2" fill="#d4d4d6" text-anchor="end" stroke="#d4d4d6" stroke-width="0.2">0</text>
<line x1="1099.5" y1="198.5" x2="1565" y2="198.5" stroke="#55555b" stroke-width="1" />
<line x1="1099.5" y1="199" x2="1099.5" y2="204" stroke="#55555b" stroke-width="1" />
<text x="1099.5" y="213" font-size="10.2" fill="#d4d4d6" text-anchor="middle" stroke="#d4d4d6" stroke-width="0.2">13:00</text>
<line x1="1178.5" y1="199" x2="1178.5" y2="204" stroke="#55555b" stroke-width="1" />
<text x="1178.25" y="213" font-size="10.2" fill="#d4d4d6" text-anchor="middle" stroke="#d4d4d6" stroke-width="0.2">14:00</text>
<line x1="1257.5" y1="199" x2="1257.5" y2="204" stroke="#55555b" stroke-width="1" />
<text x="1257" y="213" font-size="10.2" fill="#d4d4d6" text-anchor="middle" stroke="#d4d4d6" stroke-width="0.2">15:00</text>
<line x1="1335.5" y1="199" x2="1335.5" y2="204" stroke="#55555b" stroke-width="1" />
<text x="1335.75" y="213" font-size="10.2" fill="#d4d4d6" text-anchor="middle" stroke="#d4d4d6" stroke-width="0.2">16:00</text>
<line x1="1414.5" y1="199" x2="1414.5" y2="204" stroke="#55555b" stroke-width="1" />
<text x="1414.5" y="213" font-size="10.2" fill="#d4d4d6" text-anchor="middle" stroke="#d4d4d6" stroke-width="0.2">17:00</text>
<line x1="1493.5" y1="199" x2="1493.5" y2="204" stroke="#55555b" stroke-width="1" />
<text x="1493.25" y="213" font-size="10.2" fill="#d4d4d6" text-anchor="middle" stroke="#d4d4d6" stroke-width="0.2">18:00</text>
<rect x="1099" y="193" width="85.7" height="5" fill="#52e27a" shape-rendering="crispEdges"/>
<rect x="1216" y="193" width="31" height="5" fill="#52e27a" shape-rendering="crispEdges"/>
<rect x="1262.9" y="193" width="301.8" height="5" fill="#52e27a" shape-rendering="crispEdges"/>
<rect x="1247" y="41" width="15.9" height="5" fill="#52e27a" shape-rendering="crispEdges"/>
<text transform="translate(1067,129) rotate(-90)" font-size="10.8" fill="#9a9a9e" text-anchor="middle">Seconds</text>
<text x="1090.5" y="234" font-size="10.3" fill="#9a9a9e" text-anchor="start" >1 host in 1 bins</text>
<rect x="1.5" y="272.5" width="519" height="264" fill="#212125" stroke="#000000" stroke-width="1"/>
<rect x="2.5" y="273.5" width="517" height="262" fill="none" stroke="#39393e" stroke-width="1"/>
<line x1="3" y1="304.5" x2="519" y2="304.5" stroke="#39393e" stroke-width="1" />
<text x="8.5" y="295" font-size="15.4" fill="#d8d8da" text-anchor="start" stroke="#d8d8da" stroke-width="0.35" letter-spacing="0.074">PushPull Node - Count by all</text>
<line x1="48.5" y1="361.5" x2="514" y2="361.5" stroke="#303035" stroke-width="1" />
<text x="45.4" y="364.7" font-size="10.2" fill="#d4d4d6" text-anchor="end" stroke="#d4d4d6" stroke-width="0.2">500</text>
<text x="45.4" y="419.7" font-size="10.2" fill="#d4d4d6" text-anchor="end" stroke="#d4d4d6" stroke-width="0.2">0</text>
<rect x="48.5" y="412.4" width="101.5" height="3.4" fill="#78dcfc" shape-rendering="crispEdges"/>
<rect x="48.5" y="409" width="23.3" height="3.4" fill="#46127f" shape-rendering="crispEdges"/>
<rect x="150" y="412.4" width="15" height="3.4" fill="#2152dc" shape-rendering="crispEdges"/>
<rect x="150" y="409" width="15" height="3.4" fill="#3a2eb4" shape-rendering="crispEdges"/>
<rect x="165" y="412.4" width="16" height="3.4" fill="#46127f" shape-rendering="crispEdges"/>
<rect x="181" y="412.4" width="15" height="3.4" fill="#3a2eb4" shape-rendering="crispEdges"/>
<rect x="181" y="342" width="15" height="70.4" fill="#46127f" shape-rendering="crispEdges"/>
<rect x="181" y="388" width="15" height="3.4" fill="#40229c" shape-rendering="crispEdges"/>
<rect x="181" y="401.6" width="15" height="6.8" fill="#3e26a4" shape-rendering="crispEdges"/>
<rect x="181" y="335.1" width="15" height="2.9" fill="#46127f" shape-rendering="crispEdges"/>
<rect x="181" y="310" width="15" height="4" fill="#46127f" shape-rendering="crispEdges"/>
<rect x="196" y="412.4" width="16" height="3.4" fill="#46127f" shape-rendering="crispEdges"/>
<rect x="196" y="409" width="16" height="3.4" fill="#78dcfc" shape-rendering="crispEdges"/>
<rect x="196" y="405.6" width="16" height="3.4" fill="#46127f" shape-rendering="crispEdges"/>
<rect x="212" y="409" width="302" height="6.8" fill="#1f60e8" shape-rendering="crispEdges"/>
<rect x="212" y="412.4" width="15.6" height="3.4" fill="#2250d8" shape-rendering="crispEdges"/>
<rect x="228" y="409" width="95" height="6.8" fill="#2159e0" shape-rendering="crispEdges"/>
<rect x="367" y="409" width="15.6" height="3.4" fill="#2a48d0" shape-rendering="crispEdges"/>
<rect x="367" y="412.4" width="15.6" height="3.4" fill="#3070f0" shape-rendering="crispEdges"/>
<line x1="48.5" y1="416.2" x2="514" y2="416.2" stroke="#55555b" stroke-width="1" />
<line x1="48.5" y1="416.7" x2="48.5" y2="421.7" stroke="#55555b" stroke-width="1" />
<text x="48.5" y="430.7" font-size="10.2" fill="#d4d4d6" text-anchor="middle" stroke="#d4d4d6" stroke-width="0.2">13:00</text>
<line x1="127.5" y1="416.7" x2="127.5" y2="421.7" stroke="#55555b" stroke-width="1" />
<text x="127.25" y="430.7" font-size="10.2" fill="#d4d4d6" text-anchor="middle" stroke="#d4d4d6" stroke-width="0.2">14:00</text>
<line x1="206.5" y1="416.7" x2="206.5" y2="421.7" stroke="#55555b" stroke-width="1" />
<text x="206" y="430.7" font-size="10.2" fill="#d4d4d6" text-anchor="middle" stroke="#d4d4d6" stroke-width="0.2">15:00</text>
<line x1="284.5" y1="416.7" x2="284.5" y2="421.7" stroke="#55555b" stroke-width="1" />
<text x="284.75" y="430.7" font-size="10.2" fill="#d4d4d6" text-anchor="middle" stroke="#d4d4d6" stroke-width="0.2">16:00</text>
<line x1="363.5" y1="416.7" x2="363.5" y2="421.7" stroke="#55555b" stroke-width="1" />
<text x="363.5" y="430.7" font-size="10.2" fill="#d4d4d6" text-anchor="middle" stroke="#d4d4d6" stroke-width="0.2">17:00</text>
<line x1="442.5" y1="416.7" x2="442.5" y2="421.7" stroke="#55555b" stroke-width="1" />
<text x="442.25" y="430.7" font-size="10.2" fill="#d4d4d6" text-anchor="middle" stroke="#d4d4d6" stroke-width="0.2">18:00</text>
<text x="38.8" y="451.5" font-size="10.3" fill="#9a9a9e" text-anchor="start" >6035 hosts in 2 bins</text>
<rect x="526.5" y="272.5" width="519" height="264" fill="#212125" stroke="#000000" stroke-width="1"/>
<rect x="527.5" y="273.5" width="517" height="262" fill="none" stroke="#39393e" stroke-width="1"/>
<line x1="528" y1="304.5" x2="1044" y2="304.5" stroke="#39393e" stroke-width="1" />
<text x="533.5" y="295" font-size="15.4" fill="#d8d8da" text-anchor="start" stroke="#d8d8da" stroke-width="0.35" letter-spacing="0.220">Memberlist PushPull Worst case Timing for all nodes</text>
<line x1="573.5" y1="467.5" x2="1039" y2="467.5" stroke="#303035" stroke-width="1" />
<text x="569.4" y="470.8" font-size="10.2" fill="#d4d4d6" text-anchor="end" stroke="#d4d4d6" stroke-width="0.2">0.5</text>
<line x1="573.5" y1="426.5" x2="1039" y2="426.5" stroke="#303035" stroke-width="1" />
<text x="569.4" y="430.4" font-size="10.2" fill="#d4d4d6" text-anchor="end" stroke="#d4d4d6" stroke-width="0.2">1</text>
<line x1="573.5" y1="386.5" x2="1039" y2="386.5" stroke="#303035" stroke-width="1" />
<text x="569.4" y="390" font-size="10.2" fill="#d4d4d6" text-anchor="end" stroke="#d4d4d6" stroke-width="0.2">1.5</text>
<line x1="573.5" y1="346.5" x2="1039" y2="346.5" stroke="#303035" stroke-width="1" />
<text x="569.4" y="349.6" font-size="10.2" fill="#d4d4d6" text-anchor="end" stroke="#d4d4d6" stroke-width="0.2">2</text>
<text x="569.4" y="511.2" font-size="10.2" fill="#d4d4d6" text-anchor="end" stroke="#d4d4d6" stroke-width="0.2">0</text>
<text transform="translate(541,418) rotate(-90)" font-size="11.6" fill="#9a9a9e" text-anchor="middle">Minutes</text>
<rect x="573.5" y="500.4" width="85.1" height="6.6" fill="#78dcfc" shape-rendering="crispEdges"/>
<rect x="658.6" y="500.42" width="15.6" height="6.58" fill="#3620a8" shape-rendering="crispEdges"/>
<rect x="658.6" y="493.84" width="15.6" height="6.58" fill="#5cb8f4" shape-rendering="crispEdges"/>
<rect x="658.6" y="487.26" width="15.6" height="6.58" fill="#46127f" shape-rendering="crispEdges"/>
<rect x="674.2" y="500.42" width="15.6" height="6.58" fill="#46127f" shape-rendering="crispEdges"/>
<rect x="674.2" y="493.84" width="15.6" height="6.58" fill="#2152dc" shape-rendering="crispEdges"/>
<rect x="674.2" y="487.26" width="15.6" height="6.58" fill="#2a44c4" shape-rendering="crispEdges"/>
<rect x="689.8" y="500.42" width="15.6" height="6.58" fill="#46127f" shape-rendering="crispEdges"/>
<rect x="705.4" y="500.42" width="15.6" height="6.58" fill="#5cb8f4" shape-rendering="crispEdges"/>
<rect x="705.4" y="493.84" width="15.6" height="6.58" fill="#46127f" shape-rendering="crispEdges"/>
<rect x="705.4" y="487.26" width="15.6" height="6.58" fill="#46127f" shape-rendering="crispEdges"/>
<rect x="721" y="500.42" width="15.6" height="6.58" fill="#2848cc" shape-rendering="crispEdges"/>
<rect x="721" y="493.84" width="15.6" height="6.58" fill="#2a6ef0" shape-rendering="crispEdges"/>
<rect x="721" y="487.26" width="15.6" height="6.58" fill="#401fa8" shape-rendering="crispEdges"/>
<rect x="721" y="480.68" width="15.6" height="6.58" fill="#46127f" shape-rendering="crispEdges"/>
<rect x="721" y="474.1" width="15.6" height="6.58" fill="#46127f" shape-rendering="crispEdges"/>
<rect x="721" y="467.52" width="15.6" height="6.58" fill="#46127f" shape-rendering="crispEdges"/>
<rect x="721" y="460.94" width="15.6" height="6.58" fill="#46127f" shape-rendering="crispEdges"/>
<rect x="721" y="454.36" width="15.6" height="6.58" fill="#46127f" shape-rendering="crispEdges"/>
<rect x="721" y="441.2" width="15.6" height="6.58" fill="#46127f" shape-rendering="crispEdges"/>
<rect x="721" y="408.3" width="15.6" height="6.58" fill="#46127f" shape-rendering="crispEdges"/>
<rect x="721" y="329.34" width="15.6" height="6.58" fill="#46127f" shape-rendering="crispEdges"/>
<rect x="736.6" y="500.42" width="15.6" height="6.58" fill="#3036bc" shape-rendering="crispEdges"/>
<rect x="736.6" y="493.84" width="15.6" height="6.58" fill="#3082f0" shape-rendering="crispEdges"/>
<rect x="736.6" y="487.26" width="15.6" height="6.58" fill="#401fa8" shape-rendering="crispEdges"/>
<rect x="736.6" y="480.68" width="15.6" height="6.58" fill="#46127f" shape-rendering="crispEdges"/>
<rect x="736.6" y="474.1" width="15.6" height="6.58" fill="#46127f" shape-rendering="crispEdges"/>
<rect x="736.6" y="467.52" width="15.6" height="6.58" fill="#46127f" shape-rendering="crispEdges"/>
<rect x="736.6" y="460.94" width="15.6" height="6.58" fill="#46127f" shape-rendering="crispEdges"/>
<rect x="736.6" y="454.36" width="15.6" height="6.58" fill="#46127f" shape-rendering="crispEdges"/>
<rect x="736.6" y="447.78" width="15.6" height="6.58" fill="#46127f" shape-rendering="crispEdges"/>
<rect x="736.6" y="441.2" width="15.6" height="6.58" fill="#46127f" shape-rendering="crispEdges"/>
<rect x="736.6" y="434.62" width="15.6" height="6.58" fill="#46127f" shape-rendering="crispEdges"/>
<rect x="736.6" y="421.46" width="15.6" height="6.58" fill="#46127f" shape-rendering="crispEdges"/>
<rect x="736.6" y="401.72" width="15.6" height="6.58" fill="#46127f" shape-rendering="crispEdges"/>
<rect x="736.6" y="375.4" width="15.6" height="6.58" fill="#46127f" shape-rendering="crispEdges"/>
<rect x="736.6" y="309.6" width="15.6" height="6.58" fill="#46127f" shape-rendering="crispEdges"/>
<rect x="752.2" y="500.42" width="15.6" height="6.58" fill="#2152dc" shape-rendering="crispEdges"/>
<rect x="752.2" y="493.84" width="15.6" height="6.58" fill="#2a6ef0" shape-rendering="crispEdges"/>
<rect x="752.2" y="487.26" width="15.6" height="6.58" fill="#401fa8" shape-rendering="crispEdges"/>
<rect x="752.2" y="480.68" width="15.6" height="6.58" fill="#46127f" shape-rendering="crispEdges"/>
<rect x="752.2" y="474.1" width="15.6" height="6.58" fill="#46127f" shape-rendering="crispEdges"/>
<rect x="752.2" y="467.52" width="15.6" height="6.58" fill="#46127f" shape-rendering="crispEdges"/>
<rect x="752.2" y="460.94" width="15.6" height="6.58" fill="#46127f" shape-rendering="crispEdges"/>
<rect x="752.2" y="454.36" width="15.6" height="6.58" fill="#46127f" shape-rendering="crispEdges"/>
<rect x="752.2" y="447.78" width="15.6" height="6.58" fill="#46127f" shape-rendering="crispEdges"/>
<rect x="752.2" y="441.2" width="15.6" height="6.58" fill="#46127f" shape-rendering="crispEdges"/>
<rect x="752.2" y="434.62" width="15.6" height="6.58" fill="#46127f" shape-rendering="crispEdges"/>
<rect x="752.2" y="428.04" width="15.6" height="6.58" fill="#46127f" shape-rendering="crispEdges"/>
<rect x="752.2" y="421.46" width="15.6" height="6.58" fill="#46127f" shape-rendering="crispEdges"/>
<rect x="752.2" y="414.88" width="15.6" height="6.58" fill="#46127f" shape-rendering="crispEdges"/>
<rect x="752.2" y="401.72" width="15.6" height="6.58" fill="#46127f" shape-rendering="crispEdges"/>
<rect x="752.2" y="316.18" width="15.6" height="6.58" fill="#46127f" shape-rendering="crispEdges"/>
<rect x="767.8" y="500.42" width="15.6" height="6.58" fill="#2152dc" shape-rendering="crispEdges"/>
<rect x="767.8" y="493.84" width="15.6" height="6.58" fill="#2a6ef0" shape-rendering="crispEdges"/>
<rect x="767.8" y="487.26" width="15.6" height="6.58" fill="#401fa8" shape-rendering="crispEdges"/>
<rect x="767.8" y="480.68" width="15.6" height="6.58" fill="#46127f" shape-rendering="crispEdges"/>
<rect x="767.8" y="474.1" width="15.6" height="6.58" fill="#46127f" shape-rendering="crispEdges"/>
<rect x="767.8" y="467.52" width="15.6" height="6.58" fill="#46127f" shape-rendering="crispEdges"/>
<rect x="767.8" y="460.94" width="15.6" height="6.58" fill="#46127f" shape-rendering="crispEdges"/>
<rect x="767.8" y="454.36" width="15.6" height="6.58" fill="#46127f" shape-rendering="crispEdges"/>
<rect x="767.8" y="447.78" width="15.6" height="6.58" fill="#46127f" shape-rendering="crispEdges"/>
<rect x="767.8" y="441.2" width="15.6" height="6.58" fill="#46127f" shape-rendering="crispEdges"/>
<rect x="767.8" y="434.62" width="15.6" height="6.58" fill="#46127f" shape-rendering="crispEdges"/>
<rect x="767.8" y="428.04" width="15.6" height="6.58" fill="#46127f" shape-rendering="crispEdges"/>
<rect x="767.8" y="421.46" width="15.6" height="6.58" fill="#46127f" shape-rendering="crispEdges"/>
<rect x="767.8" y="414.88" width="15.6" height="6.58" fill="#46127f" shape-rendering="crispEdges"/>
<rect x="767.8" y="408.3" width="15.6" height="6.58" fill="#46127f" shape-rendering="crispEdges"/>
<rect x="767.8" y="401.72" width="15.6" height="6.58" fill="#46127f" shape-rendering="crispEdges"/>
<rect x="767.8" y="395.14" width="15.6" height="6.58" fill="#46127f" shape-rendering="crispEdges"/>
<rect x="783.4" y="500.42" width="15.6" height="6.58" fill="#2848cc" shape-rendering="crispEdges"/>
<rect x="783.4" y="493.84" width="15.6" height="6.58" fill="#2a6ef0" shape-rendering="crispEdges"/>
<rect x="783.4" y="487.26" width="15.6" height="6.58" fill="#401fa8" shape-rendering="crispEdges"/>
<rect x="783.4" y="480.68" width="15.6" height="6.58" fill="#46127f" shape-rendering="crispEdges"/>
<rect x="783.4" y="474.1" width="15.6" height="6.58" fill="#46127f" shape-rendering="crispEdges"/>
<rect x="783.4" y="467.52" width="15.6" height="6.58" fill="#46127f" shape-rendering="crispEdges"/>
<rect x="783.4" y="460.94" width="15.6" height="6.58" fill="#46127f" shape-rendering="crispEdges"/>
<rect x="783.4" y="454.36" width="15.6" height="6.58" fill="#46127f" shape-rendering="crispEdges"/>
<rect x="783.4" y="447.78" width="15.6" height="6.58" fill="#46127f" shape-rendering="crispEdges"/>
<rect x="783.4" y="441.2" width="15.6" height="6.58" fill="#46127f" shape-rendering="crispEdges"/>
<rect x="783.4" y="434.62" width="15.6" height="6.58" fill="#46127f" shape-rendering="crispEdges"/>
<rect x="783.4" y="428.04" width="15.6" height="6.58" fill="#46127f" shape-rendering="crispEdges"/>
<rect x="783.4" y="421.46" width="15.6" height="6.58" fill="#46127f" shape-rendering="crispEdges"/>
<rect x="783.4" y="414.88" width="15.6" height="6.58" fill="#46127f" shape-rendering="crispEdges"/>
<rect x="783.4" y="408.3" width="15.6" height="6.58" fill="#46127f" shape-rendering="crispEdges"/>
<rect x="783.4" y="309.6" width="15.6" height="6.58" fill="#46127f" shape-rendering="crispEdges"/>
<rect x="799" y="500.42" width="15.6" height="6.58" fill="#2a6ef0" shape-rendering="crispEdges"/>
<rect x="799" y="493.84" width="15.6" height="6.58" fill="#2a60e8" shape-rendering="crispEdges"/>
<rect x="799" y="487.26" width="15.6" height="6.58" fill="#46127f" shape-rendering="crispEdges"/>
<rect x="799" y="480.68" width="15.6" height="6.58" fill="#46127f" shape-rendering="crispEdges"/>
<rect x="799" y="474.1" width="15.6" height="6.58" fill="#46127f" shape-rendering="crispEdges"/>
<rect x="799" y="441.2" width="15.6" height="6.58" fill="#46127f" shape-rendering="crispEdges"/>
<rect x="814.6" y="500.42" width="15.6" height="6.58" fill="#2a58e0" shape-rendering="crispEdges"/>
<rect x="814.6" y="493.84" width="15.6" height="6.58" fill="#2a48cc" shape-rendering="crispEdges"/>
<rect x="814.6" y="487.26" width="15.6" height="6.58" fill="#401fa8" shape-rendering="crispEdges"/>
<rect x="814.6" y="447.78" width="15.6" height="6.58" fill="#46127f" shape-rendering="crispEdges"/>
<rect x="830.2" y="500.42" width="15.6" height="6.58" fill="#2a6ef0" shape-rendering="crispEdges"/>
<rect x="830.2" y="493.84" width="15.6" height="6.58" fill="#2152dc" shape-rendering="crispEdges"/>
<rect x="830.2" y="487.26" width="15.6" height="6.58" fill="#46127f" shape-rendering="crispEdges"/>
<rect x="845.8" y="500.42" width="15.6" height="6.58" fill="#2a58e0" shape-rendering="crispEdges"/>
<rect x="845.8" y="493.84" width="15.6" height="6.58" fill="#2a48cc" shape-rendering="crispEdges"/>
<rect x="845.8" y="487.26" width="15.6" height="6.58" fill="#401fa8" shape-rendering="crispEdges"/>
<rect x="845.8" y="480.68" width="15.6" height="6.58" fill="#46127f" shape-rendering="crispEdges"/>
<rect x="861.4" y="500.42" width="15.6" height="6.58" fill="#2152dc" shape-rendering="crispEdges"/>
<rect x="861.4" y="493.84" width="15.6" height="6.58" fill="#2152dc" shape-rendering="crispEdges"/>
<rect x="861.4" y="487.26" width="15.6" height="6.58" fill="#401fa8" shape-rendering="crispEdges"/>
<rect x="877" y="500.42" width="15.6" height="6.58" fill="#2a58e0" shape-rendering="crispEdges"/>
<rect x="877" y="493.84" width="15.6" height="6.58" fill="#2152dc" shape-rendering="crispEdges"/>
<rect x="877" y="487.26" width="15.6" height="6.58" fill="#401fa8" shape-rendering="crispEdges"/>
<rect x="877" y="480.68" width="15.6" height="6.58" fill="#46127f" shape-rendering="crispEdges"/>
<rect x="877" y="474.1" width="15.6" height="6.58" fill="#46127f" shape-rendering="crispEdges"/>
<rect x="892.6" y="500.42" width="15.6" height="6.58" fill="#2a6ef0" shape-rendering="crispEdges"/>
<rect x="892.6" y="493.84" width="15.6" height="6.58" fill="#2a48cc" shape-rendering="crispEdges"/>
<rect x="892.6" y="487.26" width="15.6" height="6.58" fill="#401fa8" shape-rendering="crispEdges"/>
<rect x="892.6" y="460.94" width="15.6" height="6.58" fill="#46127f" shape-rendering="crispEdges"/>
<rect x="908.2" y="500.42" width="15.6" height="6.58" fill="#3a7af0" shape-rendering="crispEdges"/>
<rect x="908.2" y="493.84" width="15.6" height="6.58" fill="#2a48cc" shape-rendering="crispEdges"/>
<rect x="908.2" y="487.26" width="15.6" height="6.58" fill="#401fa8" shape-rendering="crispEdges"/>
<rect x="908.2" y="480.68" width="15.6" height="6.58" fill="#46127f" shape-rendering="crispEdges"/>
<rect x="908.2" y="460.94" width="15.6" height="6.58" fill="#46127f" shape-rendering="crispEdges"/>
<rect x="908.2" y="454.36" width="15.6" height="6.58" fill="#46127f" shape-rendering="crispEdges"/>
<rect x="908.2" y="408.3" width="15.6" height="6.58" fill="#46127f" shape-rendering="crispEdges"/>
<rect x="923.8" y="500.42" width="15.6" height="6.58" fill="#2a6ef0" shape-rendering="crispEdges"/>
<rect x="923.8" y="493.84" width="15.6" height="6.58" fill="#2152dc" shape-rendering="crispEdges"/>
<rect x="923.8" y="487.26" width="15.6" height="6.58" fill="#46127f" shape-rendering="crispEdges"/>
<rect x="923.8" y="480.68" width="15.6" height="6.58" fill="#46127f" shape-rendering="crispEdges"/>
<rect x="923.8" y="474.1" width="15.6" height="6.58" fill="#46127f" shape-rendering="crispEdges"/>
<rect x="923.8" y="467.52" width="15.6" height="6.58" fill="#46127f" shape-rendering="crispEdges"/>
<rect x="923.8" y="460.94" width="15.6" height="6.58" fill="#46127f" shape-rendering="crispEdges"/>
<rect x="923.8" y="454.36" width="15.6" height="6.58" fill="#46127f" shape-rendering="crispEdges"/>
<rect x="923.8" y="447.78" width="15.6" height="6.58" fill="#46127f" shape-rendering="crispEdges"/>
<rect x="923.8" y="441.2" width="15.6" height="6.58" fill="#46127f" shape-rendering="crispEdges"/>
<rect x="923.8" y="428.04" width="15.6" height="6.58" fill="#46127f" shape-rendering="crispEdges"/>
<rect x="923.8" y="414.88" width="15.6" height="6.58" fill="#46127f" shape-rendering="crispEdges"/>
<rect x="923.8" y="381.98" width="15.6" height="6.58" fill="#46127f" shape-rendering="crispEdges"/>
<rect x="939.4" y="500.42" width="15.6" height="6.58" fill="#3a7af0" shape-rendering="crispEdges"/>
<rect x="939.4" y="493.84" width="15.6" height="6.58" fill="#2152dc" shape-rendering="crispEdges"/>
<rect x="939.4" y="487.26" width="15.6" height="6.58" fill="#46127f" shape-rendering="crispEdges"/>
<rect x="939.4" y="480.68" width="15.6" height="6.58" fill="#46127f" shape-rendering="crispEdges"/>
<rect x="939.4" y="474.1" width="15.6" height="6.58" fill="#46127f" shape-rendering="crispEdges"/>
<rect x="939.4" y="408.3" width="15.6" height="6.58" fill="#46127f" shape-rendering="crispEdges"/>
<rect x="955" y="500.42" width="15.6" height="6.58" fill="#3a80f0" shape-rendering="crispEdges"/>
<rect x="955" y="493.84" width="15.6" height="6.58" fill="#2a48cc" shape-rendering="crispEdges"/>
<rect x="955" y="487.26" width="15.6" height="6.58" fill="#46127f" shape-rendering="crispEdges"/>
<rect x="970.6" y="500.42" width="15.6" height="6.58" fill="#3a7af0" shape-rendering="crispEdges"/>
<rect x="970.6" y="493.84" width="15.6" height="6.58" fill="#2152dc" shape-rendering="crispEdges"/>
<rect x="970.6" y="487.26" width="15.6" height="6.58" fill="#46127f" shape-rendering="crispEdges"/>
<rect x="970.6" y="467.52" width="15.6" height="6.58" fill="#46127f" shape-rendering="crispEdges"/>
<rect x="986.2" y="500.42" width="15.6" height="6.58" fill="#2a6ef0" shape-rendering="crispEdges"/>
<rect x="986.2" y="493.84" width="15.6" height="6.58" fill="#2152dc" shape-rendering="crispEdges"/>
<rect x="986.2" y="487.26" width="15.6" height="6.58" fill="#46127f" shape-rendering="crispEdges"/>
<rect x="986.2" y="480.68" width="15.6" height="6.58" fill="#46127f" shape-rendering="crispEdges"/>
<rect x="1001.8" y="500.42" width="15.6" height="6.58" fill="#3a7af0" shape-rendering="crispEdges"/>
<rect x="1001.8" y="493.84" width="15.6" height="6.58" fill="#2152dc" shape-rendering="crispEdges"/>
<rect x="1001.8" y="487.26" width="15.6" height="6.58" fill="#46127f" shape-rendering="crispEdges"/>
<rect x="1001.8" y="474.1" width="15.6" height="6.58" fill="#46127f" shape-rendering="crispEdges"/>
<rect x="1001.8" y="414.88" width="15.6" height="6.58" fill="#46127f" shape-rendering="crispEdges"/>
<rect x="1017.4" y="500.42" width="15.6" height="6.58" fill="#2a6ef0" shape-rendering="crispEdges"/>
<rect x="1017.4" y="493.84" width="15.6" height="6.58" fill="#2152dc" shape-rendering="crispEdges"/>
<rect x="1017.4" y="487.26" width="15.6" height="6.58" fill="#46127f" shape-rendering="crispEdges"/>
<rect x="1033" y="500.42" width="6.2" height="6.58" fill="#3a7af0" shape-rendering="crispEdges"/>
<rect x="1033" y="493.84" width="6.2" height="6.58" fill="#2a48cc" shape-rendering="crispEdges"/>
<rect x="1033" y="487.26" width="6.2" height="6.58" fill="#401fa8" shape-rendering="crispEdges"/>
<line x1="573.5" y1="507.5" x2="1039" y2="507.5" stroke="#55555b" stroke-width="1" />
<line x1="573.5" y1="508" x2="573.5" y2="513" stroke="#55555b" stroke-width="1" />
<text x="573.5" y="521.5" font-size="10.2" fill="#d4d4d6" text-anchor="middle" stroke="#d4d4d6" stroke-width="0.2">13:00</text>
<line x1="652.5" y1="508" x2="652.5" y2="513" stroke="#55555b" stroke-width="1" />
<text x="652.25" y="521.5" font-size="10.2" fill="#d4d4d6" text-anchor="middle" stroke="#d4d4d6" stroke-width="0.2">14:00</text>
<line x1="731.5" y1="508" x2="731.5" y2="513" stroke="#55555b" stroke-width="1" />
<text x="731" y="521.5" font-size="10.2" fill="#d4d4d6" text-anchor="middle" stroke="#d4d4d6" stroke-width="0.2">15:00</text>
<line x1="809.5" y1="508" x2="809.5" y2="513" stroke="#55555b" stroke-width="1" />
<text x="809.75" y="521.5" font-size="10.2" fill="#d4d4d6" text-anchor="middle" stroke="#d4d4d6" stroke-width="0.2">16:00</text>
<line x1="888.5" y1="508" x2="888.5" y2="513" stroke="#55555b" stroke-width="1" />
<text x="888.5" y="521.5" font-size="10.2" fill="#d4d4d6" text-anchor="middle" stroke="#d4d4d6" stroke-width="0.2">17:00</text>
<line x1="967.5" y1="508" x2="967.5" y2="513" stroke="#55555b" stroke-width="1" />
<text x="967.25" y="521.5" font-size="10.2" fill="#d4d4d6" text-anchor="middle" stroke="#d4d4d6" stroke-width="0.2">18:00</text>
<rect x="1052.5" y="272.5" width="519" height="264" fill="#212125" stroke="#000000" stroke-width="1"/>
<rect x="1053.5" y="273.5" width="517" height="262" fill="none" stroke="#39393e" stroke-width="1"/>
<line x1="1054" y1="304.5" x2="1570" y2="304.5" stroke="#39393e" stroke-width="1" />
<text x="1059.5" y="295" font-size="15.4" fill="#d8d8da" text-anchor="start" stroke="#d8d8da" stroke-width="0.35" letter-spacing="0.227">Max Clients per segment</text>
<line x1="1099.5" y1="432.5" x2="1565" y2="432.5" stroke="#303035" stroke-width="1" />
<line x1="1099.5" y1="385.5" x2="1565" y2="385.5" stroke="#303035" stroke-width="1" />
<line x1="1099.5" y1="338.5" x2="1565" y2="338.5" stroke="#303035" stroke-width="1" />
<line x1="1099.5" y1="479.5" x2="1565" y2="479.5" stroke="#55555b" stroke-width="1" />
<line x1="1099.5" y1="480" x2="1099.5" y2="485" stroke="#55555b" stroke-width="1" />
<text x="1099.5" y="494" font-size="10.2" fill="#d4d4d6" text-anchor="middle" stroke="#d4d4d6" stroke-width="0.2">13:00</text>
<line x1="1178.5" y1="480" x2="1178.5" y2="485" stroke="#55555b" stroke-width="1" />
<text x="1178.25" y="494" font-size="10.2" fill="#d4d4d6" text-anchor="middle" stroke="#d4d4d6" stroke-width="0.2">14:00</text>
<line x1="1257.5" y1="480" x2="1257.5" y2="485" stroke="#55555b" stroke-width="1" />
<text x="1257" y="494" font-size="10.2" fill="#d4d4d6" text-anchor="middle" stroke="#d4d4d6" stroke-width="0.2">15:00</text>
<line x1="1335.5" y1="480" x2="1335.5" y2="485" stroke="#55555b" stroke-width="1" />
<text x="1335.75" y="494" font-size="10.2" fill="#d4d4d6" text-anchor="middle" stroke="#d4d4d6" stroke-width="0.2">16:00</text>
<line x1="1414.5" y1="480" x2="1414.5" y2="485" stroke="#55555b" stroke-width="1" />
<text x="1414.5" y="494" font-size="10.2" fill="#d4d4d6" text-anchor="middle" stroke="#d4d4d6" stroke-width="0.2">17:00</text>
<line x1="1493.5" y1="480" x2="1493.5" y2="485" stroke="#55555b" stroke-width="1" />
<text x="1493.25" y="494" font-size="10.2" fill="#d4d4d6" text-anchor="middle" stroke="#d4d4d6" stroke-width="0.2">18:00</text>
<rect x="1.5" y="540.5" width="519" height="264" fill="#212125" stroke="#000000" stroke-width="1"/>
<rect x="2.5" y="541.5" width="517" height="262" fill="none" stroke="#39393e" stroke-width="1"/>
<line x1="3" y1="572.5" x2="519" y2="572.5" stroke="#39393e" stroke-width="1" />
<text x="8.5" y="563" font-size="15.4" fill="#d8d8da" text-anchor="start" stroke="#d8d8da" stroke-width="0.35" letter-spacing="0.156">Coordinate Updates - Count by all</text>
<line x1="48.5" y1="716.5" x2="514" y2="716.5" stroke="#303035" stroke-width="1" />
<text x="45.4" y="720.4" font-size="10.2" fill="#d4d4d6" text-anchor="end" stroke="#d4d4d6" stroke-width="0.2">20</text>
<line x1="48.5" y1="686.5" x2="514" y2="686.5" stroke="#303035" stroke-width="1" />
<text x="45.4" y="689.5" font-size="10.2" fill="#d4d4d6" text-anchor="end" stroke="#d4d4d6" stroke-width="0.2">40</text>
<line x1="48.5" y1="655.5" x2="514" y2="655.5" stroke="#303035" stroke-width="1" />
<text x="45.4" y="658.6" font-size="10.2" fill="#d4d4d6" text-anchor="end" stroke="#d4d4d6" stroke-width="0.2">60</text>
<line x1="48.5" y1="624.5" x2="514" y2="624.5" stroke="#303035" stroke-width="1" />
<text x="45.4" y="627.7" font-size="10.2" fill="#d4d4d6" text-anchor="end" stroke="#d4d4d6" stroke-width="0.2">80</text>
<line x1="48.5" y1="593.5" x2="514" y2="593.5" stroke="#303035" stroke-width="1" />
<text x="45.4" y="596.8" font-size="10.2" fill="#d4d4d6" text-anchor="end" stroke="#d4d4d6" stroke-width="0.2">100</text>
<text x="45.4" y="751.3" font-size="10.2" fill="#d4d4d6" text-anchor="end" stroke="#d4d4d6" stroke-width="0.2">0</text>
<line x1="48.5" y1="747.5" x2="514" y2="747.5" stroke="#55555b" stroke-width="1" />
<line x1="48.5" y1="748" x2="48.5" y2="753" stroke="#55555b" stroke-width="1" />
<text x="48.5" y="761.5" font-size="10.2" fill="#d4d4d6" text-anchor="middle" stroke="#d4d4d6" stroke-width="0.2">13:00</text>
<line x1="127.5" y1="748" x2="127.5" y2="753" stroke="#55555b" stroke-width="1" />
<text x="127.25" y="761.5" font-size="10.2" fill="#d4d4d6" text-anchor="middle" stroke="#d4d4d6" stroke-width="0.2">14:00</text>
<line x1="206.5" y1="748" x2="206.5" y2="753" stroke="#55555b" stroke-width="1" />
<text x="206" y="761.5" font-size="10.2" fill="#d4d4d6" text-anchor="middle" stroke="#d4d4d6" stroke-width="0.2">15:00</text>
<line x1="284.5" y1="748" x2="284.5" y2="753" stroke="#55555b" stroke-width="1" />
<text x="284.75" y="761.5" font-size="10.2" fill="#d4d4d6" text-anchor="middle" stroke="#d4d4d6" stroke-width="0.2">16:00</text>
<line x1="363.5" y1="748" x2="363.5" y2="753" stroke="#55555b" stroke-width="1" />
<text x="363.5" y="761.5" font-size="10.2" fill="#d4d4d6" text-anchor="middle" stroke="#d4d4d6" stroke-width="0.2">17:00</text>
<line x1="442.5" y1="748" x2="442.5" y2="753" stroke="#55555b" stroke-width="1" />
<text x="442.25" y="761.5" font-size="10.2" fill="#d4d4d6" text-anchor="middle" stroke="#d4d4d6" stroke-width="0.2">18:00</text>
<path d="M48.3 673.8 L52.5 673.8 L55.5 676.6 L58.5 673.8 L68.6 673.8 L71.6 671.8 L74.6 673.8 L76.5 673.8 L79.5 676.6 L82.5 673.8 L100.1 673.8 L103.1 676.6 L106.1 673.8 L124.7 673.8 L127.3 676.7 L129.1 704.2 L170.9 738.6 L173.9 719.9 L175.8 722.8 L178.8 720.3 L181.7 722.3 L184.7 720.9 L187 724.2 L189.6 717 L192.2 718 L193.5 659 L194.9 615.7 L196.5 659 L200.4 745.5 L207.9 745.5 L210.2 659 L211.2 621.6 L218.1 641.3 L224 675.7 L226 673.8 L244.6 673.8 L247.6 663.9 L250.5 673.8 L254.5 672.3 L258 673.8 L265.6 673.8 L268.6 676.4 L271.6 673.8 L280 673.8 L283 671.8 L286 673.8 L287.4 673.8 L290.4 670.8 L293.4 673.8 L292.3 673.8 L295.3 676.4 L298.3 673.8 L316.1 673.8 L319.1 676.4 L322.1 673.8 L321.4 673.8 L324.4 671.5 L327.4 673.8 L339.5 673.8 L342.5 676.4 L345.5 673.8 L356.8 673.8 L359.8 671.5 L362.8 673.8 L363.3 673.8 L366.3 676.4 L369.3 673.8 L387.1 673.8 L390.1 676.4 L393.1 673.8 L410.1 673.8 L413.1 676.4 L416.1 673.8 L413.5 673.8 L416.5 671.5 L419.5 673.8 L431.4 673.8 L434.4 671.5 L437.4 673.8 L434.5 673.8 L437.5 676.4 L440.5 673.8 L457.9 673.8 L460.9 676.4 L463.9 673.8 L481.3 673.8 L484.3 676.4 L487.3 673.8 L505.2 673.8 L508.2 676.4 L511.2 673.8 L513.7 673.8" fill="none" stroke="#6a56c8" stroke-width="2.3" stroke-linejoin="round" stroke-linecap="round" />
<path d="M187 724.2 L189.6 717 L192.2 718 L194 659 L196.2 617 L198 659 L201.8 745.5 L206.5 745.5 L209 659 L210.6 623 L212 623" fill="none" stroke="#6a56c8" stroke-width="2.2" stroke-linejoin="round" stroke-linecap="round" />
<rect x="37.7" y="779.9" width="11" height="11" rx="2" fill="#6c9dcd"/>
<text x="55" y="789.5" font-size="11.4" fill="#d4d4d6" text-anchor="start" stroke="#d4d4d6" stroke-width="0.25">cns1-consul-server...</text>
<rect x="179" y="779.9" width="11" height="11" rx="2" fill="#957dcb"/>
<text x="196.3" y="789.5" font-size="11.4" fill="#d4d4d6" text-anchor="start" stroke="#d4d4d6" stroke-width="0.25">cns1-consul-server...</text>
<rect x="320.7" y="779.9" width="11" height="11" rx="2" fill="#fccb6e"/>
<text x="338" y="789.5" font-size="11.4" fill="#d4d4d6" text-anchor="start" stroke="#d4d4d6" stroke-width="0.25">cns1-consul-server...</text>
<rect x="466.5" y="775.5" width="25" height="19" rx="4" fill="#39383d" stroke="#434248"/>
<text x="479" y="788.8" font-size="11" fill="#d4d4d6" text-anchor="middle" stroke="#d4d4d6" stroke-width="0.2">+2</text>
<rect x="526.5" y="540.5" width="519" height="264" fill="#212125" stroke="#000000" stroke-width="1"/>
<rect x="527.5" y="541.5" width="517" height="262" fill="none" stroke="#39393e" stroke-width="1"/>
<line x1="528" y1="572.5" x2="1044" y2="572.5" stroke="#39393e" stroke-width="1" />
<text x="533.5" y="563" font-size="15.4" fill="#d8d8da" text-anchor="start" stroke="#d8d8da" stroke-width="0.35" letter-spacing="0.250">Coordinate Updates - max time for servers</text>
<line x1="573.5" y1="734.5" x2="1039" y2="734.5" stroke="#303035" stroke-width="1" />
<text x="569.4" y="738.2" font-size="10.2" fill="#d4d4d6" text-anchor="end" stroke="#d4d4d6" stroke-width="0.2">50</text>
<line x1="573.5" y1="693.5" x2="1039" y2="693.5" stroke="#303035" stroke-width="1" />
<text x="569.4" y="697.1" font-size="10.2" fill="#d4d4d6" text-anchor="end" stroke="#d4d4d6" stroke-width="0.2">100</text>
<line x1="573.5" y1="652.5" x2="1039" y2="652.5" stroke="#303035" stroke-width="1" />
<text x="569.4" y="656" font-size="10.2" fill="#d4d4d6" text-anchor="end" stroke="#d4d4d6" stroke-width="0.2">150</text>
<line x1="573.5" y1="611.5" x2="1039" y2="611.5" stroke="#303035" stroke-width="1" />
<text x="569.4" y="614.9" font-size="10.2" fill="#d4d4d6" text-anchor="end" stroke="#d4d4d6" stroke-width="0.2">200</text>
<text x="569.4" y="779.3" font-size="10.2" fill="#d4d4d6" text-anchor="end" stroke="#d4d4d6" stroke-width="0.2">0</text>
<text transform="translate(541,686) rotate(-90)" font-size="11.6" fill="#9a9a9e" text-anchor="middle">Milliseconds</text>
<line x1="573.5" y1="775.5" x2="1039" y2="775.5" stroke="#55555b" stroke-width="1" />
<line x1="573.5" y1="776" x2="573.5" y2="781" stroke="#55555b" stroke-width="1" />
<text x="573.5" y="789.5" font-size="10.2" fill="#d4d4d6" text-anchor="middle" stroke="#d4d4d6" stroke-width="0.2">13:00</text>
<line x1="652.5" y1="776" x2="652.5" y2="781" stroke="#55555b" stroke-width="1" />
<text x="652.25" y="789.5" font-size="10.2" fill="#d4d4d6" text-anchor="middle" stroke="#d4d4d6" stroke-width="0.2">14:00</text>
<line x1="731.5" y1="776" x2="731.5" y2="781" stroke="#55555b" stroke-width="1" />
<text x="731" y="789.5" font-size="10.2" fill="#d4d4d6" text-anchor="middle" stroke="#d4d4d6" stroke-width="0.2">15:00</text>
<line x1="809.5" y1="776" x2="809.5" y2="781" stroke="#55555b" stroke-width="1" />
<text x="809.75" y="789.5" font-size="10.2" fill="#d4d4d6" text-anchor="middle" stroke="#d4d4d6" stroke-width="0.2">16:00</text>
<line x1="888.5" y1="776" x2="888.5" y2="781" stroke="#55555b" stroke-width="1" />
<text x="888.5" y="789.5" font-size="10.2" fill="#d4d4d6" text-anchor="middle" stroke="#d4d4d6" stroke-width="0.2">17:00</text>
<line x1="967.5" y1="776" x2="967.5" y2="781" stroke="#55555b" stroke-width="1" />
<text x="967.25" y="789.5" font-size="10.2" fill="#d4d4d6" text-anchor="middle" stroke="#d4d4d6" stroke-width="0.2">18:00</text>
<path d="M573.6 769.5 L655 770 L690 772.5 L1039 772" fill="none" stroke="#fccb6e" stroke-width="2" stroke-linejoin="round" stroke-linecap="round" />
<path d="M573.6 770 L655 770.5 L690 772.5 L1039 772" fill="none" stroke="#2a6fc3" stroke-width="2" stroke-linejoin="round" stroke-linecap="round" />
<path d="M573.6 771 L655 771 L690 773 L1039 772.8" fill="none" stroke="#957dcb" stroke-width="1.8" stroke-linejoin="round" stroke-linecap="round" />
<path d="M1033 774 L1039 734" fill="none" stroke="#6c9dcd" stroke-width="1.8" stroke-linejoin="round" stroke-linecap="round" />
<path d="M702 773 L705 770 L708 773" fill="none" stroke="#2a6fc3" stroke-width="1.6" stroke-linejoin="round" stroke-linecap="round" />
<path d="M739 773 L742 769 L745 773" fill="none" stroke="#fccb6e" stroke-width="1.6" stroke-linejoin="round" stroke-linecap="round" />
<path d="M763 773 L766 770 L769 773" fill="none" stroke="#6c9dcd" stroke-width="1.6" stroke-linejoin="round" stroke-linecap="round" />
<path d="M779 773 L782 770 L785 773" fill="none" stroke="#6a56c8" stroke-width="1.6" stroke-linejoin="round" stroke-linecap="round" />
<path d="M803 773 L806 769 L809 773" fill="none" stroke="#fccb6e" stroke-width="1.6" stroke-linejoin="round" stroke-linecap="round" />
<path d="M839 773 L842 768 L845 773" fill="none" stroke="#6c9dcd" stroke-width="1.6" stroke-linejoin="round" stroke-linecap="round" />
<path d="M855 773 L858 770 L861 773" fill="none" stroke="#2a6fc3" stroke-width="1.6" stroke-linejoin="round" stroke-linecap="round" />
<path d="M863 773 L866 770 L869 773" fill="none" stroke="#fccb6e" stroke-width="1.6" stroke-linejoin="round" stroke-linecap="round" />
<path d="M922 773 L925 769 L928 773" fill="none" stroke="#2a6fc3" stroke-width="1.6" stroke-linejoin="round" stroke-linecap="round" />
<path d="M944 773 L947 769 L950 773" fill="none" stroke="#fccb6e" stroke-width="1.6" stroke-linejoin="round" stroke-linecap="round" />
<path d="M955 773 L958 770 L961 773" fill="none" stroke="#957dcb" stroke-width="1.6" stroke-linejoin="round" stroke-linecap="round" />
<path d="M983 773 L986 766 L989 773" fill="none" stroke="#fccb6e" stroke-width="1.6" stroke-linejoin="round" stroke-linecap="round" />
<path d="M990 773 L993 768 L996 773" fill="none" stroke="#fccb6e" stroke-width="1.6" stroke-linejoin="round" stroke-linecap="round" />
<path d="M996 773 L999 770 L1002 773" fill="none" stroke="#6a56c8" stroke-width="1.6" stroke-linejoin="round" stroke-linecap="round" />
<path d="M1002 773 L1005 770 L1008 773" fill="none" stroke="#6c9dcd" stroke-width="1.6" stroke-linejoin="round" stroke-linecap="round" />
<path d="M580.4 772.5 L583.7 767 L587 772.5" fill="none" stroke="#fccb6e" stroke-width="2" stroke-linejoin="round" stroke-linecap="round" />
<path d="M596 772.5 L599.3 744.9 L602.6 772.5" fill="none" stroke="#fccb6e" stroke-width="2" stroke-linejoin="round" stroke-linecap="round" />
<path d="M598.4 772.5 L601.7 714 L605 772.5" fill="none" stroke="#957dcb" stroke-width="2" stroke-linejoin="round" stroke-linecap="round" />
<path d="M601.4 772.5 L604.7 728 L608 772.5" fill="none" stroke="#6a56c8" stroke-width="2" stroke-linejoin="round" stroke-linecap="round" />
<path d="M609.1 772.5 L612.4 758.4 L615.7 772.5" fill="none" stroke="#fccb6e" stroke-width="2" stroke-linejoin="round" stroke-linecap="round" />
<path d="M614.3 772.5 L617.6 713.3 L620.9 772.5" fill="none" stroke="#fccb6e" stroke-width="2" stroke-linejoin="round" stroke-linecap="round" />
<path d="M619.4 772.5 L622.7 696.5 L626 772.5" fill="none" stroke="#6c9dcd" stroke-width="2" stroke-linejoin="round" stroke-linecap="round" />
<path d="M619.4 772.5 L622.7 745 L626 772.5" fill="none" stroke="#957dcb" stroke-width="2" stroke-linejoin="round" stroke-linecap="round" />
<path d="M635.3 772.5 L638.6 647.9 L641.9 772.5" fill="none" stroke="#fccb6e" stroke-width="2" stroke-linejoin="round" stroke-linecap="round" />
<path d="M642.7 772.5 L646 723 L649.3 772.5" fill="none" stroke="#fccb6e" stroke-width="2" stroke-linejoin="round" stroke-linecap="round" />
<path d="M645.8 772.5 L649.1 691.1 L652.4 772.5" fill="none" stroke="#2a6fc3" stroke-width="2" stroke-linejoin="round" stroke-linecap="round" />
<path d="M716.4 772.5 L719.7 756.5 L723 772.5" fill="none" stroke="#2a6fc3" stroke-width="2" stroke-linejoin="round" stroke-linecap="round" />
<path d="M732.2 772.5 L735.5 673.5 L738.8 772.5" fill="none" stroke="#fccb6e" stroke-width="2" stroke-linejoin="round" stroke-linecap="round" />
<path d="M731.7 772.5 L735 684 L738.3 772.5" fill="none" stroke="#2a6fc3" stroke-width="2" stroke-linejoin="round" stroke-linecap="round" />
<path d="M735 772.5 L738.3 688.2 L741.6 772.5" fill="none" stroke="#957dcb" stroke-width="2" stroke-linejoin="round" stroke-linecap="round" />
<path d="M745.5 772.5 L748.8 620.5 L752.1 772.5" fill="none" stroke="#957dcb" stroke-width="2" stroke-linejoin="round" stroke-linecap="round" />
<path d="M747.9 772.5 L751.2 696.1 L754.5 772.5" fill="none" stroke="#fccb6e" stroke-width="2" stroke-linejoin="round" stroke-linecap="round" />
<path d="M752.5 772.5 L755.8 742.4 L759.1 772.5" fill="none" stroke="#fccb6e" stroke-width="2" stroke-linejoin="round" stroke-linecap="round" />
<path d="M756 772.5 L759.3 683.5 L762.6 772.5" fill="none" stroke="#6c9dcd" stroke-width="2" stroke-linejoin="round" stroke-linecap="round" />
<path d="M756 772.5 L759.3 729.5 L762.6 772.5" fill="none" stroke="#6a56c8" stroke-width="2" stroke-linejoin="round" stroke-linecap="round" />
<path d="M761.2 772.5 L764.5 716.2 L767.8 772.5" fill="none" stroke="#fccb6e" stroke-width="2" stroke-linejoin="round" stroke-linecap="round" />
<path d="M768.9 772.5 L772.2 699.9 L775.5 772.5" fill="none" stroke="#fccb6e" stroke-width="2" stroke-linejoin="round" stroke-linecap="round" />
<path d="M774.2 772.5 L777.5 726 L780.8 772.5" fill="none" stroke="#2a6fc3" stroke-width="2" stroke-linejoin="round" stroke-linecap="round" />
<path d="M779.4 772.5 L782.7 714.4 L786 772.5" fill="none" stroke="#2a6fc3" stroke-width="2" stroke-linejoin="round" stroke-linecap="round" />
<path d="M787.5 772.5 L790.8 697.5 L794.1 772.5" fill="none" stroke="#6a56c8" stroke-width="2" stroke-linejoin="round" stroke-linecap="round" />
<path d="M792.7 772.5 L796 684 L799.3 772.5" fill="none" stroke="#6c9dcd" stroke-width="2" stroke-linejoin="round" stroke-linecap="round" />
<path d="M792.7 772.5 L796 715.5 L799.3 772.5" fill="none" stroke="#2a6fc3" stroke-width="2" stroke-linejoin="round" stroke-linecap="round" />
<path d="M798 772.5 L801.3 721.4 L804.6 772.5" fill="none" stroke="#6a56c8" stroke-width="2" stroke-linejoin="round" stroke-linecap="round" />
<path d="M801.5 772.5 L804.8 749.4 L808.1 772.5" fill="none" stroke="#957dcb" stroke-width="2" stroke-linejoin="round" stroke-linecap="round" />
<path d="M814.4 772.5 L817.7 715.5 L821 772.5" fill="none" stroke="#6a56c8" stroke-width="2" stroke-linejoin="round" stroke-linecap="round" />
<path d="M817.4 772.5 L820.7 712 L824 772.5" fill="none" stroke="#2a6fc3" stroke-width="2" stroke-linejoin="round" stroke-linecap="round" />
<path d="M819.7 772.5 L823 658.3 L826.3 772.5" fill="none" stroke="#fccb6e" stroke-width="2" stroke-linejoin="round" stroke-linecap="round" />
<path d="M825.4 772.5 L828.7 698 L832 772.5" fill="none" stroke="#957dcb" stroke-width="2" stroke-linejoin="round" stroke-linecap="round" />
<path d="M833.1 772.5 L836.4 682.1 L839.7 772.5" fill="none" stroke="#6a56c8" stroke-width="2" stroke-linejoin="round" stroke-linecap="round" />
<path d="M846.1 772.5 L849.4 681.7 L852.7 772.5" fill="none" stroke="#2a6fc3" stroke-width="2" stroke-linejoin="round" stroke-linecap="round" />
<path d="M864.5 772.5 L867.8 691.5 L871.1 772.5" fill="none" stroke="#957dcb" stroke-width="2" stroke-linejoin="round" stroke-linecap="round" />
<path d="M869.9 772.5 L873.2 691.5 L876.5 772.5" fill="none" stroke="#6c9dcd" stroke-width="2" stroke-linejoin="round" stroke-linecap="round" />
<path d="M872.2 772.5 L875.5 728 L878.8 772.5" fill="none" stroke="#fccb6e" stroke-width="2" stroke-linejoin="round" stroke-linecap="round" />
<path d="M880.4 772.5 L883.7 668.9 L887 772.5" fill="none" stroke="#fccb6e" stroke-width="2" stroke-linejoin="round" stroke-linecap="round" />
<path d="M877.6 772.5 L880.9 740 L884.2 772.5" fill="none" stroke="#957dcb" stroke-width="2" stroke-linejoin="round" stroke-linecap="round" />
<path d="M887.8 772.5 L891.1 728 L894.4 772.5" fill="none" stroke="#6a56c8" stroke-width="2" stroke-linejoin="round" stroke-linecap="round" />
<path d="M893.7 772.5 L897 716 L900.3 772.5" fill="none" stroke="#957dcb" stroke-width="2" stroke-linejoin="round" stroke-linecap="round" />
<path d="M898.6 772.5 L901.9 710.2 L905.2 772.5" fill="none" stroke="#fccb6e" stroke-width="2" stroke-linejoin="round" stroke-linecap="round" />
<path d="M903.7 772.5 L907 678.7 L910.3 772.5" fill="none" stroke="#6a56c8" stroke-width="2" stroke-linejoin="round" stroke-linecap="round" />
<path d="M909.1 772.5 L912.4 698 L915.7 772.5" fill="none" stroke="#fccb6e" stroke-width="2" stroke-linejoin="round" stroke-linecap="round" />
<path d="M912.6 772.5 L915.9 723.7 L919.2 772.5" fill="none" stroke="#957dcb" stroke-width="2" stroke-linejoin="round" stroke-linecap="round" />
<path d="M917 772.5 L920.3 689.9 L923.6 772.5" fill="none" stroke="#6a56c8" stroke-width="2" stroke-linejoin="round" stroke-linecap="round" />
<path d="M929.9 772.5 L933.2 765.8 L936.5 772.5" fill="none" stroke="#2a6fc3" stroke-width="2" stroke-linejoin="round" stroke-linecap="round" />
<path d="M935.2 772.5 L938.5 706.7 L941.8 772.5" fill="none" stroke="#fccb6e" stroke-width="2" stroke-linejoin="round" stroke-linecap="round" />
<path d="M948.1 772.5 L951.4 722.6 L954.7 772.5" fill="none" stroke="#2a6fc3" stroke-width="2" stroke-linejoin="round" stroke-linecap="round" />
<path d="M951.1 772.5 L954.4 699.2 L957.7 772.5" fill="none" stroke="#6c9dcd" stroke-width="2" stroke-linejoin="round" stroke-linecap="round" />
<path d="M959.1 772.5 L962.4 688.3 L965.7 772.5" fill="none" stroke="#957dcb" stroke-width="2" stroke-linejoin="round" stroke-linecap="round" />
<path d="M966.8 772.5 L970.1 709 L973.4 772.5" fill="none" stroke="#2a6fc3" stroke-width="2" stroke-linejoin="round" stroke-linecap="round" />
<path d="M985.4 772.5 L988.7 652.5 L992 772.5" fill="none" stroke="#fccb6e" stroke-width="2" stroke-linejoin="round" stroke-linecap="round" />
<path d="M985.4 772.5 L988.7 733 L992 772.5" fill="none" stroke="#2a6fc3" stroke-width="2" stroke-linejoin="round" stroke-linecap="round" />
<path d="M1010 772.5 L1013.3 767.6 L1016.6 772.5" fill="none" stroke="#6c9dcd" stroke-width="2" stroke-linejoin="round" stroke-linecap="round" />
<path d="M1016.5 772.5 L1019.8 701.6 L1023.1 772.5" fill="none" stroke="#2a6fc3" stroke-width="2" stroke-linejoin="round" stroke-linecap="round" />
<path d="M1022.1 772.5 L1025.4 716.7 L1028.7 772.5" fill="none" stroke="#6a56c8" stroke-width="2" stroke-linejoin="round" stroke-linecap="round" />
<path d="M1027.5 772.5 L1030.8 696.9 L1034.1 772.5" fill="none" stroke="#6c9dcd" stroke-width="2" stroke-linejoin="round" stroke-linecap="round" />
<path d="M1030.3 772.5 L1033.6 753 L1036.9 772.5" fill="none" stroke="#6a56c8" stroke-width="2" stroke-linejoin="round" stroke-linecap="round" />
<path d="M573.6 654.2 L576.5 771" fill="none" stroke="#957dcb" stroke-width="1.8" stroke-linejoin="round" stroke-linecap="round" />
<path d="M624.3 772.5 L628 682.2 L630.8 693.5 L634.5 772.5" fill="none" stroke="#6c9dcd" stroke-width="2" stroke-linejoin="round" stroke-linecap="round" />
<rect x="1052.5" y="540.5" width="519" height="264" fill="#212125" stroke="#000000" stroke-width="1"/>
<rect x="1053.5" y="541.5" width="517" height="262" fill="none" stroke="#39393e" stroke-width="1"/>
<line x1="1054" y1="572.5" x2="1570" y2="572.5" stroke="#39393e" stroke-width="1" />
<text x="1059.5" y="563" font-size="15.4" fill="#d8d8da" text-anchor="start" stroke="#d8d8da" stroke-width="0.35" letter-spacing="0.000">Consul Services Count</text>
<line x1="1099.5" y1="719.5" x2="1565" y2="719.5" stroke="#303035" stroke-width="1" />
<text x="1095.4" y="723.1" font-size="10.2" fill="#d4d4d6" text-anchor="end" stroke="#d4d4d6" stroke-width="0.2">1</text>
<line x1="1099.5" y1="691.5" x2="1565" y2="691.5" stroke="#303035" stroke-width="1" />
<text x="1095.4" y="694.9" font-size="10.2" fill="#d4d4d6" text-anchor="end" stroke="#d4d4d6" stroke-width="0.2">2</text>
<line x1="1099.5" y1="663.5" x2="1565" y2="663.5" stroke="#303035" stroke-width="1" />
<text x="1095.4" y="666.7" font-size="10.2" fill="#d4d4d6" text-anchor="end" stroke="#d4d4d6" stroke-width="0.2">3</text>
<line x1="1099.5" y1="634.5" x2="1565" y2="634.5" stroke="#303035" stroke-width="1" />
<text x="1095.4" y="638.5" font-size="10.2" fill="#d4d4d6" text-anchor="end" stroke="#d4d4d6" stroke-width="0.2">4</text>
<line x1="1099.5" y1="606.5" x2="1565" y2="606.5" stroke="#303035" stroke-width="1" />
<text x="1095.4" y="610.3" font-size="10.2" fill="#d4d4d6" text-anchor="end" stroke="#d4d4d6" stroke-width="0.2">5</text>
<line x1="1099.5" y1="578.5" x2="1565" y2="578.5" stroke="#303035" stroke-width="1" />
<text x="1095.4" y="582.1" font-size="10.2" fill="#d4d4d6" text-anchor="end" stroke="#d4d4d6" stroke-width="0.2">6</text>
<text x="1095.4" y="751.3" font-size="10.2" fill="#d4d4d6" text-anchor="end" stroke="#d4d4d6" stroke-width="0.2">0</text>
<line x1="1099.5" y1="747.5" x2="1565" y2="747.5" stroke="#55555b" stroke-width="1" />
<line x1="1099.5" y1="748" x2="1099.5" y2="753" stroke="#55555b" stroke-width="1" />
<text x="1099.5" y="761.5" font-size="10.2" fill="#d4d4d6" text-anchor="middle" stroke="#d4d4d6" stroke-width="0.2">13:00</text>
<line x1="1178.5" y1="748" x2="1178.5" y2="753" stroke="#55555b" stroke-width="1" />
<text x="1178.25" y="761.5" font-size="10.2" fill="#d4d4d6" text-anchor="middle" stroke="#d4d4d6" stroke-width="0.2">14:00</text>
<line x1="1257.5" y1="748" x2="1257.5" y2="753" stroke="#55555b" stroke-width="1" />
<text x="1257" y="761.5" font-size="10.2" fill="#d4d4d6" text-anchor="middle" stroke="#d4d4d6" stroke-width="0.2">15:00</text>
<line x1="1335.5" y1="748" x2="1335.5" y2="753" stroke="#55555b" stroke-width="1" />
<text x="1335.75" y="761.5" font-size="10.2" fill="#d4d4d6" text-anchor="middle" stroke="#d4d4d6" stroke-width="0.2">16:00</text>
<line x1="1414.5" y1="748" x2="1414.5" y2="753" stroke="#55555b" stroke-width="1" />
<text x="1414.5" y="761.5" font-size="10.2" fill="#d4d4d6" text-anchor="middle" stroke="#d4d4d6" stroke-width="0.2">17:00</text>
<line x1="1493.5" y1="748" x2="1493.5" y2="753" stroke="#55555b" stroke-width="1" />
<text x="1493.25" y="761.5" font-size="10.2" fill="#d4d4d6" text-anchor="middle" stroke="#d4d4d6" stroke-width="0.2">18:00</text>
<path d="M1099 606 L1564.7 606" fill="none" stroke="#6c9dcd" stroke-width="2" stroke-linejoin="round" stroke-linecap="round" />
<rect x="1088.7" y="779.9" width="11" height="11" rx="2" fill="#6c9dcd"/>
<text x="1106" y="789.5" font-size="11.4" fill="#d4d4d6" text-anchor="start" stroke="#d4d4d6" stroke-width="0.25">dc1</text>
<path d="M43 46H180V245H43Z" fill="none" stroke="#c0290c" stroke-width="2" stroke-linejoin="round" stroke-opacity="0.85"/>
<path d="M188 43H493V247H188Z" fill="none" stroke="#0cb20c" stroke-width="2" stroke-linejoin="round" stroke-opacity="0.85"/>
<path d="M567 54H704V253H567Z" fill="none" stroke="#c0290c" stroke-width="2" stroke-linejoin="round" stroke-opacity="0.85"/>
<path d="M712 52.5H1021V256H712Z" fill="none" stroke="#0cb20c" stroke-width="2" stroke-linejoin="round" stroke-opacity="0.85"/>
<path d="M1242 36H1551V256H1242Z" fill="none" stroke="#0cb20c" stroke-width="2" stroke-linejoin="round" stroke-opacity="0.85"/>
<path d="M170 301H475V505H170Z" fill="none" stroke="#0cb20c" stroke-width="2" stroke-linejoin="round" stroke-opacity="0.85"/>
<path d="M550 329H702V527.5H550Z" fill="none" stroke="#c0290c" stroke-width="2" stroke-linejoin="round" stroke-opacity="0.85"/>
<path d="M712 302H1021V522H712Z" fill="none" stroke="#0cb20c" stroke-width="2" stroke-linejoin="round" stroke-opacity="0.85"/>
<path d="M186 571H495V793H186Z" fill="none" stroke="#0cb20c" stroke-width="2" stroke-linejoin="round" stroke-opacity="0.85"/>
<path d="M712 579H1021V799H712Z" fill="none" stroke="#0cb20c" stroke-width="2" stroke-linejoin="round" stroke-opacity="0.85"/>
</svg>
</body></html>
